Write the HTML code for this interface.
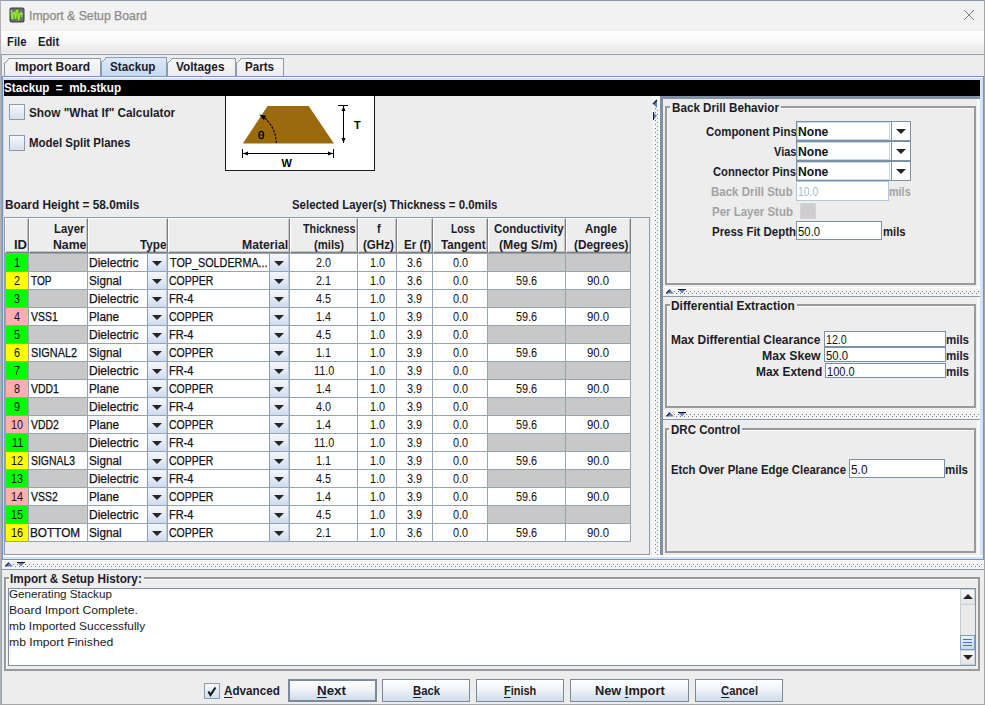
<!DOCTYPE html>
<html><head><meta charset="utf-8"><style>
html,body{margin:0;padding:0;width:985px;height:705px;overflow:hidden;background:#ededed}
body{position:relative;font-family:"Liberation Sans",sans-serif}
body>div{position:absolute}
body>svg{position:absolute}
.r{-webkit-text-stroke:0.25px currentColor}
.t{white-space:nowrap;line-height:20px;transform-origin:0 0}
u{text-decoration-thickness:1px;text-underline-offset:1.5px}
</style></head><body>
<div style="left:0px;top:0px;width:985px;height:30px;background:#f2f2f2"></div>
<div style="left:0px;top:0px;width:985px;height:1px;background:#8e9aa6"></div>
<svg style="left:9px;top:7px" width="16" height="16" viewBox="0 0 16 16"><rect x="0.5" y="0.5" width="15" height="15" rx="2" fill="#3a3a3a"/><rect x="1.5" y="1.5" width="13" height="13" rx="1" fill="#6e6e72"/><path d="M1.5 7.5 L14.5 7" stroke="#c8c8d0" stroke-width="0.8"/><path d="M1.5 4.5 L2.5 3.5 L2.8 11.5 L3.8 11.8 L4.3 5.5 L5.8 5.3 L6.2 11.3 L7 11 L7.4 3.5 L8.8 3.4 L9.4 12.8 L10.2 12 L10.8 7 L12.5 5.3 L12.8 10.2" stroke="#8cf01e" stroke-width="1.3" fill="none" stroke-linejoin="round"/></svg>
<div class="t r" style="left:29.37px;top:6.00px;font-size:12.5px;font-weight:normal;color:#8a8a8a;transform:scaleX(0.9801);">Import &amp; Setup Board</div>
<svg style="left:963px;top:9px" width="12" height="12" viewBox="0 0 12 12"><path d="M1 1 L11 11 M11 1 L1 11" stroke="#808080" stroke-width="1"/></svg>
<div style="left:0px;top:31px;width:985px;height:23px;background:linear-gradient(#ffffff,#fafafa 40%,#e4e4e4)"></div>
<div style="left:0px;top:53px;width:985px;height:1px;background:#f3efea"></div>
<div style="left:0px;top:54px;width:985px;height:1px;background:#8e9cab"></div>
<div class="t" style="left:6.94px;top:32.00px;font-size:12px;font-weight:bold;color:#1c1c28;transform:scaleX(0.9399);">File</div>
<div class="t" style="left:37.84px;top:32.00px;font-size:12px;font-weight:bold;color:#1c1c28;transform:scaleX(0.9359);">Edit</div>
<div style="left:0px;top:55px;width:985px;height:650px;background:#ededed"></div>
<div style="left:4px;top:58px;width:97px;height:19px;background:linear-gradient(#f8f8f8,#ececec);border:1px solid #8d9cab;border-bottom:none;box-sizing:border-box;clip-path:polygon(5px 0,100% 0,100% 100%,0 100%,0 5px)"></div>
<svg style="left:4px;top:58px" width="6" height="6"><path d="M0.5 5.5 L5.5 0.5" stroke="#8d9cab" stroke-width="1"/></svg>
<div class="t" style="left:14.89px;top:57.00px;font-size:12px;font-weight:bold;color:#1c1c28;transform:scaleX(0.9981);">Import Board</div>
<div style="left:167px;top:58px;width:69px;height:19px;background:linear-gradient(#f8f8f8,#ececec);border:1px solid #8d9cab;border-bottom:none;box-sizing:border-box;clip-path:polygon(5px 0,100% 0,100% 100%,0 100%,0 5px)"></div>
<svg style="left:167px;top:58px" width="6" height="6"><path d="M0.5 5.5 L5.5 0.5" stroke="#8d9cab" stroke-width="1"/></svg>
<div class="t" style="left:176.11px;top:57.00px;font-size:12px;font-weight:bold;color:#1c1c28;transform:scaleX(0.9868);">Voltages</div>
<div style="left:236px;top:58px;width:48px;height:19px;background:linear-gradient(#f8f8f8,#ececec);border:1px solid #8d9cab;border-bottom:none;box-sizing:border-box;clip-path:polygon(5px 0,100% 0,100% 100%,0 100%,0 5px)"></div>
<svg style="left:236px;top:58px" width="6" height="6"><path d="M0.5 5.5 L5.5 0.5" stroke="#8d9cab" stroke-width="1"/></svg>
<div class="t" style="left:244.72px;top:57.00px;font-size:12px;font-weight:bold;color:#1c1c28;transform:scaleX(0.9648);">Parts</div>
<div style="left:101px;top:57px;width:66px;height:20px;background:linear-gradient(#dce9f7,#c5daf1);border:1px solid #8d9cab;border-bottom:none;box-sizing:border-box;clip-path:polygon(5px 0,100% 0,100% 100%,0 100%,0 5px)"></div>
<svg style="left:101px;top:57px" width="6" height="6"><path d="M0.5 5.5 L5.5 0.5" stroke="#8d9cab" stroke-width="1"/></svg>
<div class="t" style="left:110.45px;top:57.00px;font-size:12px;font-weight:bold;color:#1c1c28;transform:scaleX(0.9729);">Stackup</div>
<div style="left:2px;top:76px;width:982px;height:484px;border:1px solid #7593c4;box-sizing:border-box;background:#d3e3f5"></div>
<div style="left:3px;top:77px;width:980px;height:1px;background:#fff"></div>
<div style="left:3px;top:78px;width:1px;height:481px;background:#c6daf2"></div>
<div style="left:4px;top:80px;width:976px;height:16px;background:#000"></div>
<div class="t" style="left:4.25px;top:78.00px;font-size:12px;font-weight:bold;color:#fff;transform:scaleX(0.9722);">Stackup&nbsp; =&nbsp; mb.stkup</div>
<div style="left:4px;top:96px;width:648px;height:460px;background:#ededed"></div>
<div style="left:4px;top:96px;width:648px;height:1px;background:#e3ebf3"></div>
<div style="left:9px;top:104px;width:16px;height:16px;border:1px solid #8c9cae;box-sizing:border-box;background:linear-gradient(#f6f8fb,#d3dfeb)"></div>
<div class="t" style="left:28.55px;top:103.00px;font-size:12px;font-weight:bold;color:#1c1c28;transform:scaleX(0.9831);">Show "What If" Calculator</div>
<div style="left:9px;top:135px;width:16px;height:16px;border:1px solid #8c9cae;box-sizing:border-box;background:linear-gradient(#f6f8fb,#d3dfeb)"></div>
<div class="t" style="left:28.73px;top:133.00px;font-size:12px;font-weight:bold;color:#1c1c28;transform:scaleX(0.9558);">Model Split Planes</div>
<svg style="left:225px;top:96px" width="150" height="76" viewBox="0 0 150 76"><rect x="0.5" y="-1" width="149" height="75.5" fill="#fff" stroke="#1a1a1a" stroke-width="1"/><path d="M42.6 10 L83.7 10 L109 47.6 L17.8 47.6 Z" fill="#9b6a0c"/><path d="M51.3 47.1 A33.5 33.5 0 0 0 38.1 20.8" stroke="#000" fill="none" stroke-width="1.1" stroke-dasharray="2.5 1.2"/><path d="M34.3 18.4 L41.1 19.7 L38.5 24.0 Z" fill="#000"/><path d="M18 57.5 L108 57.5" stroke="#000" stroke-width="1"/><path d="M17.5 53 L17.5 62 M108.5 53 L108.5 62" stroke="#000"/><path d="M18 57.5 L23 55.5 L23 59.5 Z M108 57.5 L103 55.5 L103 59.5 Z" fill="#000"/><path d="M113 9.5 L123 9.5 M118.5 10 L118.5 47" stroke="#000"/><path d="M118.5 10 L116.5 15 L120.5 15 Z M118.5 47 L116.5 42 L120.5 42 Z" fill="#000"/><text x="129" y="33.3" font-family="Liberation Sans" font-weight="bold" font-size="11">T</text><text x="61.8" y="70.8" text-anchor="middle" font-family="Liberation Sans" font-weight="bold" font-size="11">W</text><ellipse cx="36.3" cy="39" rx="2.3" ry="3.6" fill="none" stroke="#000" stroke-width="1.3"/><path d="M34.5 39 L38 39" stroke="#000" stroke-width="0.8"/></svg>
<div class="t" style="left:5.30px;top:195.00px;font-size:12px;font-weight:bold;color:#1c1c28;transform:scaleX(0.9853);">Board Height = 58.0mils</div>
<div class="t" style="left:291.76px;top:195.00px;font-size:12px;font-weight:bold;color:#1c1c28;transform:scaleX(0.9520);">Selected Layer(s) Thickness = 0.0mils</div>
<div style="left:4px;top:217px;width:646px;height:338px;border:1px solid #8d9aa8;box-sizing:border-box;background:#ededed"></div>
<div style="left:5px;top:218px;width:644px;height:35px;background:#ededed"></div>
<div style="left:5px;top:218px;width:24px;height:35px;box-sizing:border-box;border-left:1px solid #fff;border-top:1px solid #fff;border-right:1px solid #7d7d7d;border-bottom:1px solid #7d7d7d;box-shadow:inset -1px -1px 0 #c4c4c4;background:#ededed"></div>
<div style="left:29px;top:218px;width:59px;height:35px;box-sizing:border-box;border-left:1px solid #fff;border-top:1px solid #fff;border-right:1px solid #7d7d7d;border-bottom:1px solid #7d7d7d;box-shadow:inset -1px -1px 0 #c4c4c4;background:#ededed"></div>
<div style="left:88px;top:218px;width:80px;height:35px;box-sizing:border-box;border-left:1px solid #fff;border-top:1px solid #fff;border-right:1px solid #7d7d7d;border-bottom:1px solid #7d7d7d;box-shadow:inset -1px -1px 0 #c4c4c4;background:#ededed"></div>
<div style="left:168px;top:218px;width:122px;height:35px;box-sizing:border-box;border-left:1px solid #fff;border-top:1px solid #fff;border-right:1px solid #7d7d7d;border-bottom:1px solid #7d7d7d;box-shadow:inset -1px -1px 0 #c4c4c4;background:#ededed"></div>
<div style="left:290px;top:218px;width:68px;height:35px;box-sizing:border-box;border-left:1px solid #fff;border-top:1px solid #fff;border-right:1px solid #7d7d7d;border-bottom:1px solid #7d7d7d;box-shadow:inset -1px -1px 0 #c4c4c4;background:#ededed"></div>
<div style="left:358px;top:218px;width:39px;height:35px;box-sizing:border-box;border-left:1px solid #fff;border-top:1px solid #fff;border-right:1px solid #7d7d7d;border-bottom:1px solid #7d7d7d;box-shadow:inset -1px -1px 0 #c4c4c4;background:#ededed"></div>
<div style="left:397px;top:218px;width:36px;height:35px;box-sizing:border-box;border-left:1px solid #fff;border-top:1px solid #fff;border-right:1px solid #7d7d7d;border-bottom:1px solid #7d7d7d;box-shadow:inset -1px -1px 0 #c4c4c4;background:#ededed"></div>
<div style="left:433px;top:218px;width:55px;height:35px;box-sizing:border-box;border-left:1px solid #fff;border-top:1px solid #fff;border-right:1px solid #7d7d7d;border-bottom:1px solid #7d7d7d;box-shadow:inset -1px -1px 0 #c4c4c4;background:#ededed"></div>
<div style="left:488px;top:218px;width:78px;height:35px;box-sizing:border-box;border-left:1px solid #fff;border-top:1px solid #fff;border-right:1px solid #7d7d7d;border-bottom:1px solid #7d7d7d;box-shadow:inset -1px -1px 0 #c4c4c4;background:#ededed"></div>
<div style="left:566px;top:218px;width:65px;height:35px;box-sizing:border-box;border-left:1px solid #fff;border-top:1px solid #fff;border-right:1px solid #7d7d7d;border-bottom:1px solid #7d7d7d;box-shadow:inset -1px -1px 0 #c4c4c4;background:#ededed"></div>
<div class="t" style="left:14.12px;top:235.00px;font-size:12px;font-weight:bold;color:#1c1c28;transform:scaleX(1.0861);">ID</div>
<div class="t" style="left:53.53px;top:219.00px;font-size:12px;font-weight:bold;color:#1c1c28;transform:scaleX(0.9501);">Layer</div>
<div class="t" style="left:52.77px;top:235.00px;font-size:12px;font-weight:bold;color:#1c1c28;transform:scaleX(1.0232);">Name</div>
<div class="t" style="left:139.68px;top:235.00px;font-size:12px;font-weight:bold;color:#1c1c28;transform:scaleX(0.9744);">Type</div>
<div class="t" style="left:242.08px;top:235.00px;font-size:12px;font-weight:bold;color:#1c1c28;transform:scaleX(1.0181);">Material</div>
<div class="t" style="left:303.49px;top:219.00px;font-size:12px;font-weight:bold;color:#1c1c28;transform:scaleX(0.8953);">Thickness</div>
<div class="t" style="left:313.74px;top:235.00px;font-size:12px;font-weight:bold;color:#1c1c28;transform:scaleX(0.9413);">(mils)</div>
<div class="t" style="left:377.01px;top:219.00px;font-size:12px;font-weight:bold;color:#1c1c28;transform:scaleX(0.9186);">f</div>
<div class="t" style="left:363.42px;top:235.00px;font-size:12px;font-weight:bold;color:#1c1c28;transform:scaleX(0.9617);">(GHz)</div>
<div class="t" style="left:403.82px;top:235.00px;font-size:12px;font-weight:bold;color:#1c1c28;transform:scaleX(0.9669);">Er (f)</div>
<div class="t" style="left:450.81px;top:219.00px;font-size:12px;font-weight:bold;color:#1c1c28;transform:scaleX(0.8502);">Loss</div>
<div class="t" style="left:441.38px;top:235.00px;font-size:12px;font-weight:bold;color:#1c1c28;transform:scaleX(0.9734);">Tangent</div>
<div class="t" style="left:493.94px;top:219.00px;font-size:12px;font-weight:bold;color:#1c1c28;transform:scaleX(0.9581);">Conductivity</div>
<div class="t" style="left:499.39px;top:235.00px;font-size:12px;font-weight:bold;color:#1c1c28;transform:scaleX(1.0173);">(Meg S/m)</div>
<div class="t" style="left:585.01px;top:219.00px;font-size:12px;font-weight:bold;color:#1c1c28;transform:scaleX(0.9559);">Angle</div>
<div class="t" style="left:574.01px;top:235.00px;font-size:12px;font-weight:bold;color:#1c1c28;transform:scaleX(0.9843);">(Degrees)</div>
<div style="left:5px;top:253px;width:626px;height:289px;background:#96a3b2"></div>
<div style="left:6px;top:254px;width:22px;height:17px;background:#00ff00"></div>
<div style="left:29px;top:254px;width:58px;height:17px;background:#c8c8c8"></div>
<div style="left:88px;top:254px;width:79px;height:17px;background:#fff"></div>
<div style="left:168px;top:254px;width:121px;height:17px;background:#fff"></div>
<div style="left:290px;top:254px;width:67px;height:17px;background:#fff"></div>
<div style="left:358px;top:254px;width:38px;height:17px;background:#fff"></div>
<div style="left:397px;top:254px;width:35px;height:17px;background:#fff"></div>
<div style="left:433px;top:254px;width:54px;height:17px;background:#fff"></div>
<div style="left:488px;top:254px;width:77px;height:17px;background:#c8c8c8"></div>
<div style="left:566px;top:254px;width:64px;height:17px;background:#c8c8c8"></div>
<div class="t" style="left:14.15px;top:253.00px;font-size:12px;font-weight:normal;color:#101018;transform:scaleX(0.9000);">1</div>
<div class="t r" style="left:88.81px;top:253.00px;font-size:12px;font-weight:normal;color:#101018;transform:scaleX(1.0015);">Dielectric</div>
<div style="left:147px;top:254px;width:20px;height:17px;box-sizing:border-box;border-left:1px solid #8b9cb0;border-right:1px solid #c0ccd8;background:linear-gradient(#f4f6fb,#e3eaf5 50%,#cddbee)"></div>
<svg style="left:152px;top:261px" width="10" height="6"><path d="M0 0 L10 0 L5 5 Z" fill="#262626"/></svg>
<div class="t r" style="left:169.56px;top:253.00px;font-size:12px;font-weight:normal;color:#101018;transform:scaleX(0.8998);">TOP_SOLDERMA...</div>
<div style="left:269px;top:254px;width:20px;height:17px;box-sizing:border-box;border-left:1px solid #8b9cb0;border-right:1px solid #c0ccd8;background:linear-gradient(#f4f6fb,#e3eaf5 50%,#cddbee)"></div>
<svg style="left:274px;top:261px" width="10" height="6"><path d="M0 0 L10 0 L5 5 Z" fill="#262626"/></svg>
<div class="t" style="left:316.23px;top:253.00px;font-size:12px;font-weight:normal;color:#101018;transform:scaleX(0.9000);">2.0</div>
<div class="t" style="left:369.59px;top:253.00px;font-size:12px;font-weight:normal;color:#101018;transform:scaleX(0.9000);">1.0</div>
<div class="t" style="left:407.32px;top:253.00px;font-size:12px;font-weight:normal;color:#101018;transform:scaleX(0.9000);">3.6</div>
<div class="t" style="left:452.78px;top:253.00px;font-size:12px;font-weight:normal;color:#101018;transform:scaleX(0.9000);">0.0</div>
<div style="left:6px;top:272px;width:22px;height:17px;background:#ffff00"></div>
<div style="left:29px;top:272px;width:58px;height:17px;background:#fff"></div>
<div style="left:88px;top:272px;width:79px;height:17px;background:#fff"></div>
<div style="left:168px;top:272px;width:121px;height:17px;background:#fff"></div>
<div style="left:290px;top:272px;width:67px;height:17px;background:#fff"></div>
<div style="left:358px;top:272px;width:38px;height:17px;background:#fff"></div>
<div style="left:397px;top:272px;width:35px;height:17px;background:#fff"></div>
<div style="left:433px;top:272px;width:54px;height:17px;background:#fff"></div>
<div style="left:488px;top:272px;width:77px;height:17px;background:#fff"></div>
<div style="left:566px;top:272px;width:64px;height:17px;background:#fff"></div>
<div class="t" style="left:14.30px;top:271.00px;font-size:12px;font-weight:normal;color:#101018;transform:scaleX(0.9000);">2</div>
<div class="t r" style="left:30.97px;top:271.00px;font-size:12px;font-weight:normal;color:#101018;transform:scaleX(0.8408);">TOP</div>
<div class="t r" style="left:89.27px;top:271.00px;font-size:12px;font-weight:normal;color:#101018;transform:scaleX(0.9747);">Signal</div>
<div style="left:147px;top:272px;width:20px;height:17px;box-sizing:border-box;border-left:1px solid #8b9cb0;border-right:1px solid #c0ccd8;background:linear-gradient(#f4f6fb,#e3eaf5 50%,#cddbee)"></div>
<svg style="left:152px;top:279px" width="10" height="6"><path d="M0 0 L10 0 L5 5 Z" fill="#262626"/></svg>
<div class="t r" style="left:169.28px;top:271.00px;font-size:12px;font-weight:normal;color:#101018;transform:scaleX(0.8727);">COPPER</div>
<div style="left:269px;top:272px;width:20px;height:17px;box-sizing:border-box;border-left:1px solid #8b9cb0;border-right:1px solid #c0ccd8;background:linear-gradient(#f4f6fb,#e3eaf5 50%,#cddbee)"></div>
<svg style="left:274px;top:279px" width="10" height="6"><path d="M0 0 L10 0 L5 5 Z" fill="#262626"/></svg>
<div class="t" style="left:316.28px;top:271.00px;font-size:12px;font-weight:normal;color:#101018;transform:scaleX(0.9000);">2.1</div>
<div class="t" style="left:369.59px;top:271.00px;font-size:12px;font-weight:normal;color:#101018;transform:scaleX(0.9000);">1.0</div>
<div class="t" style="left:407.32px;top:271.00px;font-size:12px;font-weight:normal;color:#101018;transform:scaleX(0.9000);">3.6</div>
<div class="t" style="left:452.78px;top:271.00px;font-size:12px;font-weight:normal;color:#101018;transform:scaleX(0.9000);">0.0</div>
<div class="t" style="left:516.27px;top:271.00px;font-size:12px;font-weight:normal;color:#101018;transform:scaleX(0.9038);">59.6</div>
<div class="t" style="left:587.21px;top:271.00px;font-size:12px;font-weight:normal;color:#101018;transform:scaleX(0.9453);">90.0</div>
<div style="left:6px;top:290px;width:22px;height:17px;background:#00ff00"></div>
<div style="left:29px;top:290px;width:58px;height:17px;background:#c8c8c8"></div>
<div style="left:88px;top:290px;width:79px;height:17px;background:#fff"></div>
<div style="left:168px;top:290px;width:121px;height:17px;background:#fff"></div>
<div style="left:290px;top:290px;width:67px;height:17px;background:#fff"></div>
<div style="left:358px;top:290px;width:38px;height:17px;background:#fff"></div>
<div style="left:397px;top:290px;width:35px;height:17px;background:#fff"></div>
<div style="left:433px;top:290px;width:54px;height:17px;background:#fff"></div>
<div style="left:488px;top:290px;width:77px;height:17px;background:#c8c8c8"></div>
<div style="left:566px;top:290px;width:64px;height:17px;background:#c8c8c8"></div>
<div class="t" style="left:14.33px;top:289.00px;font-size:12px;font-weight:normal;color:#101018;transform:scaleX(0.9000);">3</div>
<div class="t r" style="left:88.81px;top:289.00px;font-size:12px;font-weight:normal;color:#101018;transform:scaleX(1.0015);">Dielectric</div>
<div style="left:147px;top:290px;width:20px;height:17px;box-sizing:border-box;border-left:1px solid #8b9cb0;border-right:1px solid #c0ccd8;background:linear-gradient(#f4f6fb,#e3eaf5 50%,#cddbee)"></div>
<svg style="left:152px;top:297px" width="10" height="6"><path d="M0 0 L10 0 L5 5 Z" fill="#262626"/></svg>
<div class="t r" style="left:168.90px;top:289.00px;font-size:12px;font-weight:normal;color:#101018;transform:scaleX(0.9123);">FR-4</div>
<div style="left:269px;top:290px;width:20px;height:17px;box-sizing:border-box;border-left:1px solid #8b9cb0;border-right:1px solid #c0ccd8;background:linear-gradient(#f4f6fb,#e3eaf5 50%,#cddbee)"></div>
<svg style="left:274px;top:297px" width="10" height="6"><path d="M0 0 L10 0 L5 5 Z" fill="#262626"/></svg>
<div class="t" style="left:316.39px;top:289.00px;font-size:12px;font-weight:normal;color:#101018;transform:scaleX(0.9000);">4.5</div>
<div class="t" style="left:369.59px;top:289.00px;font-size:12px;font-weight:normal;color:#101018;transform:scaleX(0.9000);">1.0</div>
<div class="t" style="left:407.33px;top:289.00px;font-size:12px;font-weight:normal;color:#101018;transform:scaleX(0.9000);">3.9</div>
<div class="t" style="left:452.78px;top:289.00px;font-size:12px;font-weight:normal;color:#101018;transform:scaleX(0.9000);">0.0</div>
<div style="left:6px;top:308px;width:22px;height:17px;background:#ffafaf"></div>
<div style="left:29px;top:308px;width:58px;height:17px;background:#fff"></div>
<div style="left:88px;top:308px;width:79px;height:17px;background:#fff"></div>
<div style="left:168px;top:308px;width:121px;height:17px;background:#fff"></div>
<div style="left:290px;top:308px;width:67px;height:17px;background:#fff"></div>
<div style="left:358px;top:308px;width:38px;height:17px;background:#fff"></div>
<div style="left:397px;top:308px;width:35px;height:17px;background:#fff"></div>
<div style="left:433px;top:308px;width:54px;height:17px;background:#fff"></div>
<div style="left:488px;top:308px;width:77px;height:17px;background:#fff"></div>
<div style="left:566px;top:308px;width:64px;height:17px;background:#fff"></div>
<div class="t" style="left:14.33px;top:307.00px;font-size:12px;font-weight:normal;color:#101018;transform:scaleX(0.9000);">4</div>
<div class="t r" style="left:31.15px;top:307.00px;font-size:12px;font-weight:normal;color:#101018;transform:scaleX(0.8700);">VSS1</div>
<div class="t r" style="left:88.83px;top:307.00px;font-size:12px;font-weight:normal;color:#101018;transform:scaleX(0.9798);">Plane</div>
<div style="left:147px;top:308px;width:20px;height:17px;box-sizing:border-box;border-left:1px solid #8b9cb0;border-right:1px solid #c0ccd8;background:linear-gradient(#f4f6fb,#e3eaf5 50%,#cddbee)"></div>
<svg style="left:152px;top:315px" width="10" height="6"><path d="M0 0 L10 0 L5 5 Z" fill="#262626"/></svg>
<div class="t r" style="left:169.28px;top:307.00px;font-size:12px;font-weight:normal;color:#101018;transform:scaleX(0.8727);">COPPER</div>
<div style="left:269px;top:308px;width:20px;height:17px;box-sizing:border-box;border-left:1px solid #8b9cb0;border-right:1px solid #c0ccd8;background:linear-gradient(#f4f6fb,#e3eaf5 50%,#cddbee)"></div>
<svg style="left:274px;top:315px" width="10" height="6"><path d="M0 0 L10 0 L5 5 Z" fill="#262626"/></svg>
<div class="t" style="left:316.04px;top:307.00px;font-size:12px;font-weight:normal;color:#101018;transform:scaleX(0.9000);">1.4</div>
<div class="t" style="left:369.59px;top:307.00px;font-size:12px;font-weight:normal;color:#101018;transform:scaleX(0.9000);">1.0</div>
<div class="t" style="left:407.33px;top:307.00px;font-size:12px;font-weight:normal;color:#101018;transform:scaleX(0.9000);">3.9</div>
<div class="t" style="left:452.78px;top:307.00px;font-size:12px;font-weight:normal;color:#101018;transform:scaleX(0.9000);">0.0</div>
<div class="t" style="left:516.27px;top:307.00px;font-size:12px;font-weight:normal;color:#101018;transform:scaleX(0.9038);">59.6</div>
<div class="t" style="left:587.21px;top:307.00px;font-size:12px;font-weight:normal;color:#101018;transform:scaleX(0.9453);">90.0</div>
<div style="left:6px;top:326px;width:22px;height:17px;background:#00ff00"></div>
<div style="left:29px;top:326px;width:58px;height:17px;background:#c8c8c8"></div>
<div style="left:88px;top:326px;width:79px;height:17px;background:#fff"></div>
<div style="left:168px;top:326px;width:121px;height:17px;background:#fff"></div>
<div style="left:290px;top:326px;width:67px;height:17px;background:#fff"></div>
<div style="left:358px;top:326px;width:38px;height:17px;background:#fff"></div>
<div style="left:397px;top:326px;width:35px;height:17px;background:#fff"></div>
<div style="left:433px;top:326px;width:54px;height:17px;background:#fff"></div>
<div style="left:488px;top:326px;width:77px;height:17px;background:#c8c8c8"></div>
<div style="left:566px;top:326px;width:64px;height:17px;background:#c8c8c8"></div>
<div class="t" style="left:14.30px;top:325.00px;font-size:12px;font-weight:normal;color:#101018;transform:scaleX(0.9000);">5</div>
<div class="t r" style="left:88.81px;top:325.00px;font-size:12px;font-weight:normal;color:#101018;transform:scaleX(1.0015);">Dielectric</div>
<div style="left:147px;top:326px;width:20px;height:17px;box-sizing:border-box;border-left:1px solid #8b9cb0;border-right:1px solid #c0ccd8;background:linear-gradient(#f4f6fb,#e3eaf5 50%,#cddbee)"></div>
<svg style="left:152px;top:333px" width="10" height="6"><path d="M0 0 L10 0 L5 5 Z" fill="#262626"/></svg>
<div class="t r" style="left:168.90px;top:325.00px;font-size:12px;font-weight:normal;color:#101018;transform:scaleX(0.9123);">FR-4</div>
<div style="left:269px;top:326px;width:20px;height:17px;box-sizing:border-box;border-left:1px solid #8b9cb0;border-right:1px solid #c0ccd8;background:linear-gradient(#f4f6fb,#e3eaf5 50%,#cddbee)"></div>
<svg style="left:274px;top:333px" width="10" height="6"><path d="M0 0 L10 0 L5 5 Z" fill="#262626"/></svg>
<div class="t" style="left:316.39px;top:325.00px;font-size:12px;font-weight:normal;color:#101018;transform:scaleX(0.9000);">4.5</div>
<div class="t" style="left:369.59px;top:325.00px;font-size:12px;font-weight:normal;color:#101018;transform:scaleX(0.9000);">1.0</div>
<div class="t" style="left:407.33px;top:325.00px;font-size:12px;font-weight:normal;color:#101018;transform:scaleX(0.9000);">3.9</div>
<div class="t" style="left:452.78px;top:325.00px;font-size:12px;font-weight:normal;color:#101018;transform:scaleX(0.9000);">0.0</div>
<div style="left:6px;top:344px;width:22px;height:17px;background:#ffff00"></div>
<div style="left:29px;top:344px;width:58px;height:17px;background:#fff"></div>
<div style="left:88px;top:344px;width:79px;height:17px;background:#fff"></div>
<div style="left:168px;top:344px;width:121px;height:17px;background:#fff"></div>
<div style="left:290px;top:344px;width:67px;height:17px;background:#fff"></div>
<div style="left:358px;top:344px;width:38px;height:17px;background:#fff"></div>
<div style="left:397px;top:344px;width:35px;height:17px;background:#fff"></div>
<div style="left:433px;top:344px;width:54px;height:17px;background:#fff"></div>
<div style="left:488px;top:344px;width:77px;height:17px;background:#fff"></div>
<div style="left:566px;top:344px;width:64px;height:17px;background:#fff"></div>
<div class="t" style="left:14.26px;top:343.00px;font-size:12px;font-weight:normal;color:#101018;transform:scaleX(0.9000);">6</div>
<div class="t r" style="left:30.71px;top:343.00px;font-size:12px;font-weight:normal;color:#101018;transform:scaleX(0.9085);">SIGNAL2</div>
<div class="t r" style="left:89.27px;top:343.00px;font-size:12px;font-weight:normal;color:#101018;transform:scaleX(0.9747);">Signal</div>
<div style="left:147px;top:344px;width:20px;height:17px;box-sizing:border-box;border-left:1px solid #8b9cb0;border-right:1px solid #c0ccd8;background:linear-gradient(#f4f6fb,#e3eaf5 50%,#cddbee)"></div>
<svg style="left:152px;top:351px" width="10" height="6"><path d="M0 0 L10 0 L5 5 Z" fill="#262626"/></svg>
<div class="t r" style="left:169.28px;top:343.00px;font-size:12px;font-weight:normal;color:#101018;transform:scaleX(0.8727);">COPPER</div>
<div style="left:269px;top:344px;width:20px;height:17px;box-sizing:border-box;border-left:1px solid #8b9cb0;border-right:1px solid #c0ccd8;background:linear-gradient(#f4f6fb,#e3eaf5 50%,#cddbee)"></div>
<svg style="left:274px;top:351px" width="10" height="6"><path d="M0 0 L10 0 L5 5 Z" fill="#262626"/></svg>
<div class="t" style="left:316.15px;top:343.00px;font-size:12px;font-weight:normal;color:#101018;transform:scaleX(0.9000);">1.1</div>
<div class="t" style="left:369.59px;top:343.00px;font-size:12px;font-weight:normal;color:#101018;transform:scaleX(0.9000);">1.0</div>
<div class="t" style="left:407.33px;top:343.00px;font-size:12px;font-weight:normal;color:#101018;transform:scaleX(0.9000);">3.9</div>
<div class="t" style="left:452.78px;top:343.00px;font-size:12px;font-weight:normal;color:#101018;transform:scaleX(0.9000);">0.0</div>
<div class="t" style="left:516.27px;top:343.00px;font-size:12px;font-weight:normal;color:#101018;transform:scaleX(0.9038);">59.6</div>
<div class="t" style="left:587.21px;top:343.00px;font-size:12px;font-weight:normal;color:#101018;transform:scaleX(0.9453);">90.0</div>
<div style="left:6px;top:362px;width:22px;height:17px;background:#00ff00"></div>
<div style="left:29px;top:362px;width:58px;height:17px;background:#c8c8c8"></div>
<div style="left:88px;top:362px;width:79px;height:17px;background:#fff"></div>
<div style="left:168px;top:362px;width:121px;height:17px;background:#fff"></div>
<div style="left:290px;top:362px;width:67px;height:17px;background:#fff"></div>
<div style="left:358px;top:362px;width:38px;height:17px;background:#fff"></div>
<div style="left:397px;top:362px;width:35px;height:17px;background:#fff"></div>
<div style="left:433px;top:362px;width:54px;height:17px;background:#fff"></div>
<div style="left:488px;top:362px;width:77px;height:17px;background:#c8c8c8"></div>
<div style="left:566px;top:362px;width:64px;height:17px;background:#c8c8c8"></div>
<div class="t" style="left:14.30px;top:361.00px;font-size:12px;font-weight:normal;color:#101018;transform:scaleX(0.9000);">7</div>
<div class="t r" style="left:88.81px;top:361.00px;font-size:12px;font-weight:normal;color:#101018;transform:scaleX(1.0015);">Dielectric</div>
<div style="left:147px;top:362px;width:20px;height:17px;box-sizing:border-box;border-left:1px solid #8b9cb0;border-right:1px solid #c0ccd8;background:linear-gradient(#f4f6fb,#e3eaf5 50%,#cddbee)"></div>
<svg style="left:152px;top:369px" width="10" height="6"><path d="M0 0 L10 0 L5 5 Z" fill="#262626"/></svg>
<div class="t r" style="left:168.90px;top:361.00px;font-size:12px;font-weight:normal;color:#101018;transform:scaleX(0.9123);">FR-4</div>
<div style="left:269px;top:362px;width:20px;height:17px;box-sizing:border-box;border-left:1px solid #8b9cb0;border-right:1px solid #c0ccd8;background:linear-gradient(#f4f6fb,#e3eaf5 50%,#cddbee)"></div>
<svg style="left:274px;top:369px" width="10" height="6"><path d="M0 0 L10 0 L5 5 Z" fill="#262626"/></svg>
<div class="t" style="left:313.50px;top:361.00px;font-size:12px;font-weight:normal;color:#101018;transform:scaleX(0.9000);">11.0</div>
<div class="t" style="left:369.59px;top:361.00px;font-size:12px;font-weight:normal;color:#101018;transform:scaleX(0.9000);">1.0</div>
<div class="t" style="left:407.33px;top:361.00px;font-size:12px;font-weight:normal;color:#101018;transform:scaleX(0.9000);">3.9</div>
<div class="t" style="left:452.78px;top:361.00px;font-size:12px;font-weight:normal;color:#101018;transform:scaleX(0.9000);">0.0</div>
<div style="left:6px;top:380px;width:22px;height:17px;background:#ffafaf"></div>
<div style="left:29px;top:380px;width:58px;height:17px;background:#fff"></div>
<div style="left:88px;top:380px;width:79px;height:17px;background:#fff"></div>
<div style="left:168px;top:380px;width:121px;height:17px;background:#fff"></div>
<div style="left:290px;top:380px;width:67px;height:17px;background:#fff"></div>
<div style="left:358px;top:380px;width:38px;height:17px;background:#fff"></div>
<div style="left:397px;top:380px;width:35px;height:17px;background:#fff"></div>
<div style="left:433px;top:380px;width:54px;height:17px;background:#fff"></div>
<div style="left:488px;top:380px;width:77px;height:17px;background:#fff"></div>
<div style="left:566px;top:380px;width:64px;height:17px;background:#fff"></div>
<div class="t" style="left:14.30px;top:379.00px;font-size:12px;font-weight:normal;color:#101018;transform:scaleX(0.9000);">8</div>
<div class="t r" style="left:31.15px;top:379.00px;font-size:12px;font-weight:normal;color:#101018;transform:scaleX(0.8700);">VDD1</div>
<div class="t r" style="left:88.83px;top:379.00px;font-size:12px;font-weight:normal;color:#101018;transform:scaleX(0.9798);">Plane</div>
<div style="left:147px;top:380px;width:20px;height:17px;box-sizing:border-box;border-left:1px solid #8b9cb0;border-right:1px solid #c0ccd8;background:linear-gradient(#f4f6fb,#e3eaf5 50%,#cddbee)"></div>
<svg style="left:152px;top:387px" width="10" height="6"><path d="M0 0 L10 0 L5 5 Z" fill="#262626"/></svg>
<div class="t r" style="left:169.28px;top:379.00px;font-size:12px;font-weight:normal;color:#101018;transform:scaleX(0.8727);">COPPER</div>
<div style="left:269px;top:380px;width:20px;height:17px;box-sizing:border-box;border-left:1px solid #8b9cb0;border-right:1px solid #c0ccd8;background:linear-gradient(#f4f6fb,#e3eaf5 50%,#cddbee)"></div>
<svg style="left:274px;top:387px" width="10" height="6"><path d="M0 0 L10 0 L5 5 Z" fill="#262626"/></svg>
<div class="t" style="left:316.04px;top:379.00px;font-size:12px;font-weight:normal;color:#101018;transform:scaleX(0.9000);">1.4</div>
<div class="t" style="left:369.59px;top:379.00px;font-size:12px;font-weight:normal;color:#101018;transform:scaleX(0.9000);">1.0</div>
<div class="t" style="left:407.33px;top:379.00px;font-size:12px;font-weight:normal;color:#101018;transform:scaleX(0.9000);">3.9</div>
<div class="t" style="left:452.78px;top:379.00px;font-size:12px;font-weight:normal;color:#101018;transform:scaleX(0.9000);">0.0</div>
<div class="t" style="left:516.27px;top:379.00px;font-size:12px;font-weight:normal;color:#101018;transform:scaleX(0.9038);">59.6</div>
<div class="t" style="left:587.21px;top:379.00px;font-size:12px;font-weight:normal;color:#101018;transform:scaleX(0.9453);">90.0</div>
<div style="left:6px;top:398px;width:22px;height:17px;background:#00ff00"></div>
<div style="left:29px;top:398px;width:58px;height:17px;background:#c8c8c8"></div>
<div style="left:88px;top:398px;width:79px;height:17px;background:#fff"></div>
<div style="left:168px;top:398px;width:121px;height:17px;background:#fff"></div>
<div style="left:290px;top:398px;width:67px;height:17px;background:#fff"></div>
<div style="left:358px;top:398px;width:38px;height:17px;background:#fff"></div>
<div style="left:397px;top:398px;width:35px;height:17px;background:#fff"></div>
<div style="left:433px;top:398px;width:54px;height:17px;background:#fff"></div>
<div style="left:488px;top:398px;width:77px;height:17px;background:#c8c8c8"></div>
<div style="left:566px;top:398px;width:64px;height:17px;background:#c8c8c8"></div>
<div class="t" style="left:14.29px;top:397.00px;font-size:12px;font-weight:normal;color:#101018;transform:scaleX(0.9000);">9</div>
<div class="t r" style="left:88.81px;top:397.00px;font-size:12px;font-weight:normal;color:#101018;transform:scaleX(1.0015);">Dielectric</div>
<div style="left:147px;top:398px;width:20px;height:17px;box-sizing:border-box;border-left:1px solid #8b9cb0;border-right:1px solid #c0ccd8;background:linear-gradient(#f4f6fb,#e3eaf5 50%,#cddbee)"></div>
<svg style="left:152px;top:405px" width="10" height="6"><path d="M0 0 L10 0 L5 5 Z" fill="#262626"/></svg>
<div class="t r" style="left:168.90px;top:397.00px;font-size:12px;font-weight:normal;color:#101018;transform:scaleX(0.9123);">FR-4</div>
<div style="left:269px;top:398px;width:20px;height:17px;box-sizing:border-box;border-left:1px solid #8b9cb0;border-right:1px solid #c0ccd8;background:linear-gradient(#f4f6fb,#e3eaf5 50%,#cddbee)"></div>
<svg style="left:274px;top:405px" width="10" height="6"><path d="M0 0 L10 0 L5 5 Z" fill="#262626"/></svg>
<div class="t" style="left:316.38px;top:397.00px;font-size:12px;font-weight:normal;color:#101018;transform:scaleX(0.9000);">4.0</div>
<div class="t" style="left:369.59px;top:397.00px;font-size:12px;font-weight:normal;color:#101018;transform:scaleX(0.9000);">1.0</div>
<div class="t" style="left:407.33px;top:397.00px;font-size:12px;font-weight:normal;color:#101018;transform:scaleX(0.9000);">3.9</div>
<div class="t" style="left:452.78px;top:397.00px;font-size:12px;font-weight:normal;color:#101018;transform:scaleX(0.9000);">0.0</div>
<div style="left:6px;top:416px;width:22px;height:17px;background:#ffafaf"></div>
<div style="left:29px;top:416px;width:58px;height:17px;background:#fff"></div>
<div style="left:88px;top:416px;width:79px;height:17px;background:#fff"></div>
<div style="left:168px;top:416px;width:121px;height:17px;background:#fff"></div>
<div style="left:290px;top:416px;width:67px;height:17px;background:#fff"></div>
<div style="left:358px;top:416px;width:38px;height:17px;background:#fff"></div>
<div style="left:397px;top:416px;width:35px;height:17px;background:#fff"></div>
<div style="left:433px;top:416px;width:54px;height:17px;background:#fff"></div>
<div style="left:488px;top:416px;width:77px;height:17px;background:#fff"></div>
<div style="left:566px;top:416px;width:64px;height:17px;background:#fff"></div>
<div class="t" style="left:11.10px;top:415.00px;font-size:12px;font-weight:normal;color:#101018;transform:scaleX(0.9000);">10</div>
<div class="t r" style="left:31.15px;top:415.00px;font-size:12px;font-weight:normal;color:#101018;transform:scaleX(0.8700);">VDD2</div>
<div class="t r" style="left:88.83px;top:415.00px;font-size:12px;font-weight:normal;color:#101018;transform:scaleX(0.9798);">Plane</div>
<div style="left:147px;top:416px;width:20px;height:17px;box-sizing:border-box;border-left:1px solid #8b9cb0;border-right:1px solid #c0ccd8;background:linear-gradient(#f4f6fb,#e3eaf5 50%,#cddbee)"></div>
<svg style="left:152px;top:423px" width="10" height="6"><path d="M0 0 L10 0 L5 5 Z" fill="#262626"/></svg>
<div class="t r" style="left:169.28px;top:415.00px;font-size:12px;font-weight:normal;color:#101018;transform:scaleX(0.8727);">COPPER</div>
<div style="left:269px;top:416px;width:20px;height:17px;box-sizing:border-box;border-left:1px solid #8b9cb0;border-right:1px solid #c0ccd8;background:linear-gradient(#f4f6fb,#e3eaf5 50%,#cddbee)"></div>
<svg style="left:274px;top:423px" width="10" height="6"><path d="M0 0 L10 0 L5 5 Z" fill="#262626"/></svg>
<div class="t" style="left:316.04px;top:415.00px;font-size:12px;font-weight:normal;color:#101018;transform:scaleX(0.9000);">1.4</div>
<div class="t" style="left:369.59px;top:415.00px;font-size:12px;font-weight:normal;color:#101018;transform:scaleX(0.9000);">1.0</div>
<div class="t" style="left:407.33px;top:415.00px;font-size:12px;font-weight:normal;color:#101018;transform:scaleX(0.9000);">3.9</div>
<div class="t" style="left:452.78px;top:415.00px;font-size:12px;font-weight:normal;color:#101018;transform:scaleX(0.9000);">0.0</div>
<div class="t" style="left:516.27px;top:415.00px;font-size:12px;font-weight:normal;color:#101018;transform:scaleX(0.9038);">59.6</div>
<div class="t" style="left:587.21px;top:415.00px;font-size:12px;font-weight:normal;color:#101018;transform:scaleX(0.9453);">90.0</div>
<div style="left:6px;top:434px;width:22px;height:17px;background:#00ff00"></div>
<div style="left:29px;top:434px;width:58px;height:17px;background:#c8c8c8"></div>
<div style="left:88px;top:434px;width:79px;height:17px;background:#fff"></div>
<div style="left:168px;top:434px;width:121px;height:17px;background:#fff"></div>
<div style="left:290px;top:434px;width:67px;height:17px;background:#fff"></div>
<div style="left:358px;top:434px;width:38px;height:17px;background:#fff"></div>
<div style="left:397px;top:434px;width:35px;height:17px;background:#fff"></div>
<div style="left:433px;top:434px;width:54px;height:17px;background:#fff"></div>
<div style="left:488px;top:434px;width:77px;height:17px;background:#c8c8c8"></div>
<div style="left:566px;top:434px;width:64px;height:17px;background:#c8c8c8"></div>
<div class="t" style="left:11.55px;top:433.00px;font-size:12px;font-weight:normal;color:#101018;transform:scaleX(0.9000);">11</div>
<div class="t r" style="left:88.81px;top:433.00px;font-size:12px;font-weight:normal;color:#101018;transform:scaleX(1.0015);">Dielectric</div>
<div style="left:147px;top:434px;width:20px;height:17px;box-sizing:border-box;border-left:1px solid #8b9cb0;border-right:1px solid #c0ccd8;background:linear-gradient(#f4f6fb,#e3eaf5 50%,#cddbee)"></div>
<svg style="left:152px;top:441px" width="10" height="6"><path d="M0 0 L10 0 L5 5 Z" fill="#262626"/></svg>
<div class="t r" style="left:168.90px;top:433.00px;font-size:12px;font-weight:normal;color:#101018;transform:scaleX(0.9123);">FR-4</div>
<div style="left:269px;top:434px;width:20px;height:17px;box-sizing:border-box;border-left:1px solid #8b9cb0;border-right:1px solid #c0ccd8;background:linear-gradient(#f4f6fb,#e3eaf5 50%,#cddbee)"></div>
<svg style="left:274px;top:441px" width="10" height="6"><path d="M0 0 L10 0 L5 5 Z" fill="#262626"/></svg>
<div class="t" style="left:313.50px;top:433.00px;font-size:12px;font-weight:normal;color:#101018;transform:scaleX(0.9000);">11.0</div>
<div class="t" style="left:369.59px;top:433.00px;font-size:12px;font-weight:normal;color:#101018;transform:scaleX(0.9000);">1.0</div>
<div class="t" style="left:407.33px;top:433.00px;font-size:12px;font-weight:normal;color:#101018;transform:scaleX(0.9000);">3.9</div>
<div class="t" style="left:452.78px;top:433.00px;font-size:12px;font-weight:normal;color:#101018;transform:scaleX(0.9000);">0.0</div>
<div style="left:6px;top:452px;width:22px;height:17px;background:#ffff00"></div>
<div style="left:29px;top:452px;width:58px;height:17px;background:#fff"></div>
<div style="left:88px;top:452px;width:79px;height:17px;background:#fff"></div>
<div style="left:168px;top:452px;width:121px;height:17px;background:#fff"></div>
<div style="left:290px;top:452px;width:67px;height:17px;background:#fff"></div>
<div style="left:358px;top:452px;width:38px;height:17px;background:#fff"></div>
<div style="left:397px;top:452px;width:35px;height:17px;background:#fff"></div>
<div style="left:433px;top:452px;width:54px;height:17px;background:#fff"></div>
<div style="left:488px;top:452px;width:77px;height:17px;background:#fff"></div>
<div style="left:566px;top:452px;width:64px;height:17px;background:#fff"></div>
<div class="t" style="left:11.17px;top:451.00px;font-size:12px;font-weight:normal;color:#101018;transform:scaleX(0.9000);">12</div>
<div class="t r" style="left:30.73px;top:451.00px;font-size:12px;font-weight:normal;color:#101018;transform:scaleX(0.8700);">SIGNAL3</div>
<div class="t r" style="left:89.27px;top:451.00px;font-size:12px;font-weight:normal;color:#101018;transform:scaleX(0.9747);">Signal</div>
<div style="left:147px;top:452px;width:20px;height:17px;box-sizing:border-box;border-left:1px solid #8b9cb0;border-right:1px solid #c0ccd8;background:linear-gradient(#f4f6fb,#e3eaf5 50%,#cddbee)"></div>
<svg style="left:152px;top:459px" width="10" height="6"><path d="M0 0 L10 0 L5 5 Z" fill="#262626"/></svg>
<div class="t r" style="left:169.28px;top:451.00px;font-size:12px;font-weight:normal;color:#101018;transform:scaleX(0.8727);">COPPER</div>
<div style="left:269px;top:452px;width:20px;height:17px;box-sizing:border-box;border-left:1px solid #8b9cb0;border-right:1px solid #c0ccd8;background:linear-gradient(#f4f6fb,#e3eaf5 50%,#cddbee)"></div>
<svg style="left:274px;top:459px" width="10" height="6"><path d="M0 0 L10 0 L5 5 Z" fill="#262626"/></svg>
<div class="t" style="left:316.15px;top:451.00px;font-size:12px;font-weight:normal;color:#101018;transform:scaleX(0.9000);">1.1</div>
<div class="t" style="left:369.59px;top:451.00px;font-size:12px;font-weight:normal;color:#101018;transform:scaleX(0.9000);">1.0</div>
<div class="t" style="left:407.33px;top:451.00px;font-size:12px;font-weight:normal;color:#101018;transform:scaleX(0.9000);">3.9</div>
<div class="t" style="left:452.78px;top:451.00px;font-size:12px;font-weight:normal;color:#101018;transform:scaleX(0.9000);">0.0</div>
<div class="t" style="left:516.27px;top:451.00px;font-size:12px;font-weight:normal;color:#101018;transform:scaleX(0.9038);">59.6</div>
<div class="t" style="left:587.21px;top:451.00px;font-size:12px;font-weight:normal;color:#101018;transform:scaleX(0.9453);">90.0</div>
<div style="left:6px;top:470px;width:22px;height:17px;background:#00ff00"></div>
<div style="left:29px;top:470px;width:58px;height:17px;background:#c8c8c8"></div>
<div style="left:88px;top:470px;width:79px;height:17px;background:#fff"></div>
<div style="left:168px;top:470px;width:121px;height:17px;background:#fff"></div>
<div style="left:290px;top:470px;width:67px;height:17px;background:#fff"></div>
<div style="left:358px;top:470px;width:38px;height:17px;background:#fff"></div>
<div style="left:397px;top:470px;width:35px;height:17px;background:#fff"></div>
<div style="left:433px;top:470px;width:54px;height:17px;background:#fff"></div>
<div style="left:488px;top:470px;width:77px;height:17px;background:#c8c8c8"></div>
<div style="left:566px;top:470px;width:64px;height:17px;background:#c8c8c8"></div>
<div class="t" style="left:11.13px;top:469.00px;font-size:12px;font-weight:normal;color:#101018;transform:scaleX(0.9000);">13</div>
<div class="t r" style="left:88.81px;top:469.00px;font-size:12px;font-weight:normal;color:#101018;transform:scaleX(1.0015);">Dielectric</div>
<div style="left:147px;top:470px;width:20px;height:17px;box-sizing:border-box;border-left:1px solid #8b9cb0;border-right:1px solid #c0ccd8;background:linear-gradient(#f4f6fb,#e3eaf5 50%,#cddbee)"></div>
<svg style="left:152px;top:477px" width="10" height="6"><path d="M0 0 L10 0 L5 5 Z" fill="#262626"/></svg>
<div class="t r" style="left:168.90px;top:469.00px;font-size:12px;font-weight:normal;color:#101018;transform:scaleX(0.9123);">FR-4</div>
<div style="left:269px;top:470px;width:20px;height:17px;box-sizing:border-box;border-left:1px solid #8b9cb0;border-right:1px solid #c0ccd8;background:linear-gradient(#f4f6fb,#e3eaf5 50%,#cddbee)"></div>
<svg style="left:274px;top:477px" width="10" height="6"><path d="M0 0 L10 0 L5 5 Z" fill="#262626"/></svg>
<div class="t" style="left:316.39px;top:469.00px;font-size:12px;font-weight:normal;color:#101018;transform:scaleX(0.9000);">4.5</div>
<div class="t" style="left:369.59px;top:469.00px;font-size:12px;font-weight:normal;color:#101018;transform:scaleX(0.9000);">1.0</div>
<div class="t" style="left:407.33px;top:469.00px;font-size:12px;font-weight:normal;color:#101018;transform:scaleX(0.9000);">3.9</div>
<div class="t" style="left:452.78px;top:469.00px;font-size:12px;font-weight:normal;color:#101018;transform:scaleX(0.9000);">0.0</div>
<div style="left:6px;top:488px;width:22px;height:17px;background:#ffafaf"></div>
<div style="left:29px;top:488px;width:58px;height:17px;background:#fff"></div>
<div style="left:88px;top:488px;width:79px;height:17px;background:#fff"></div>
<div style="left:168px;top:488px;width:121px;height:17px;background:#fff"></div>
<div style="left:290px;top:488px;width:67px;height:17px;background:#fff"></div>
<div style="left:358px;top:488px;width:38px;height:17px;background:#fff"></div>
<div style="left:397px;top:488px;width:35px;height:17px;background:#fff"></div>
<div style="left:433px;top:488px;width:54px;height:17px;background:#fff"></div>
<div style="left:488px;top:488px;width:77px;height:17px;background:#fff"></div>
<div style="left:566px;top:488px;width:64px;height:17px;background:#fff"></div>
<div class="t" style="left:11.05px;top:487.00px;font-size:12px;font-weight:normal;color:#101018;transform:scaleX(0.9000);">14</div>
<div class="t r" style="left:31.15px;top:487.00px;font-size:12px;font-weight:normal;color:#101018;transform:scaleX(0.8700);">VSS2</div>
<div class="t r" style="left:88.83px;top:487.00px;font-size:12px;font-weight:normal;color:#101018;transform:scaleX(0.9798);">Plane</div>
<div style="left:147px;top:488px;width:20px;height:17px;box-sizing:border-box;border-left:1px solid #8b9cb0;border-right:1px solid #c0ccd8;background:linear-gradient(#f4f6fb,#e3eaf5 50%,#cddbee)"></div>
<svg style="left:152px;top:495px" width="10" height="6"><path d="M0 0 L10 0 L5 5 Z" fill="#262626"/></svg>
<div class="t r" style="left:169.28px;top:487.00px;font-size:12px;font-weight:normal;color:#101018;transform:scaleX(0.8727);">COPPER</div>
<div style="left:269px;top:488px;width:20px;height:17px;box-sizing:border-box;border-left:1px solid #8b9cb0;border-right:1px solid #c0ccd8;background:linear-gradient(#f4f6fb,#e3eaf5 50%,#cddbee)"></div>
<svg style="left:274px;top:495px" width="10" height="6"><path d="M0 0 L10 0 L5 5 Z" fill="#262626"/></svg>
<div class="t" style="left:316.04px;top:487.00px;font-size:12px;font-weight:normal;color:#101018;transform:scaleX(0.9000);">1.4</div>
<div class="t" style="left:369.59px;top:487.00px;font-size:12px;font-weight:normal;color:#101018;transform:scaleX(0.9000);">1.0</div>
<div class="t" style="left:407.33px;top:487.00px;font-size:12px;font-weight:normal;color:#101018;transform:scaleX(0.9000);">3.9</div>
<div class="t" style="left:452.78px;top:487.00px;font-size:12px;font-weight:normal;color:#101018;transform:scaleX(0.9000);">0.0</div>
<div class="t" style="left:516.27px;top:487.00px;font-size:12px;font-weight:normal;color:#101018;transform:scaleX(0.9038);">59.6</div>
<div class="t" style="left:587.21px;top:487.00px;font-size:12px;font-weight:normal;color:#101018;transform:scaleX(0.9453);">90.0</div>
<div style="left:6px;top:506px;width:22px;height:17px;background:#00ff00"></div>
<div style="left:29px;top:506px;width:58px;height:17px;background:#c8c8c8"></div>
<div style="left:88px;top:506px;width:79px;height:17px;background:#fff"></div>
<div style="left:168px;top:506px;width:121px;height:17px;background:#fff"></div>
<div style="left:290px;top:506px;width:67px;height:17px;background:#fff"></div>
<div style="left:358px;top:506px;width:38px;height:17px;background:#fff"></div>
<div style="left:397px;top:506px;width:35px;height:17px;background:#fff"></div>
<div style="left:433px;top:506px;width:54px;height:17px;background:#fff"></div>
<div style="left:488px;top:506px;width:77px;height:17px;background:#c8c8c8"></div>
<div style="left:566px;top:506px;width:64px;height:17px;background:#c8c8c8"></div>
<div class="t" style="left:11.12px;top:505.00px;font-size:12px;font-weight:normal;color:#101018;transform:scaleX(0.9000);">15</div>
<div class="t r" style="left:88.81px;top:505.00px;font-size:12px;font-weight:normal;color:#101018;transform:scaleX(1.0015);">Dielectric</div>
<div style="left:147px;top:506px;width:20px;height:17px;box-sizing:border-box;border-left:1px solid #8b9cb0;border-right:1px solid #c0ccd8;background:linear-gradient(#f4f6fb,#e3eaf5 50%,#cddbee)"></div>
<svg style="left:152px;top:513px" width="10" height="6"><path d="M0 0 L10 0 L5 5 Z" fill="#262626"/></svg>
<div class="t r" style="left:168.90px;top:505.00px;font-size:12px;font-weight:normal;color:#101018;transform:scaleX(0.9123);">FR-4</div>
<div style="left:269px;top:506px;width:20px;height:17px;box-sizing:border-box;border-left:1px solid #8b9cb0;border-right:1px solid #c0ccd8;background:linear-gradient(#f4f6fb,#e3eaf5 50%,#cddbee)"></div>
<svg style="left:274px;top:513px" width="10" height="6"><path d="M0 0 L10 0 L5 5 Z" fill="#262626"/></svg>
<div class="t" style="left:316.39px;top:505.00px;font-size:12px;font-weight:normal;color:#101018;transform:scaleX(0.9000);">4.5</div>
<div class="t" style="left:369.59px;top:505.00px;font-size:12px;font-weight:normal;color:#101018;transform:scaleX(0.9000);">1.0</div>
<div class="t" style="left:407.33px;top:505.00px;font-size:12px;font-weight:normal;color:#101018;transform:scaleX(0.9000);">3.9</div>
<div class="t" style="left:452.78px;top:505.00px;font-size:12px;font-weight:normal;color:#101018;transform:scaleX(0.9000);">0.0</div>
<div style="left:6px;top:524px;width:22px;height:17px;background:#ffff00"></div>
<div style="left:29px;top:524px;width:58px;height:17px;background:#fff"></div>
<div style="left:88px;top:524px;width:79px;height:17px;background:#fff"></div>
<div style="left:168px;top:524px;width:121px;height:17px;background:#fff"></div>
<div style="left:290px;top:524px;width:67px;height:17px;background:#fff"></div>
<div style="left:358px;top:524px;width:38px;height:17px;background:#fff"></div>
<div style="left:397px;top:524px;width:35px;height:17px;background:#fff"></div>
<div style="left:433px;top:524px;width:54px;height:17px;background:#fff"></div>
<div style="left:488px;top:524px;width:77px;height:17px;background:#fff"></div>
<div style="left:566px;top:524px;width:64px;height:17px;background:#fff"></div>
<div class="t" style="left:11.13px;top:523.00px;font-size:12px;font-weight:normal;color:#101018;transform:scaleX(0.9000);">16</div>
<div class="t r" style="left:30.23px;top:523.00px;font-size:12px;font-weight:normal;color:#101018;transform:scaleX(0.9809);">BOTTOM</div>
<div class="t r" style="left:89.27px;top:523.00px;font-size:12px;font-weight:normal;color:#101018;transform:scaleX(0.9747);">Signal</div>
<div style="left:147px;top:524px;width:20px;height:17px;box-sizing:border-box;border-left:1px solid #8b9cb0;border-right:1px solid #c0ccd8;background:linear-gradient(#f4f6fb,#e3eaf5 50%,#cddbee)"></div>
<svg style="left:152px;top:531px" width="10" height="6"><path d="M0 0 L10 0 L5 5 Z" fill="#262626"/></svg>
<div class="t r" style="left:169.28px;top:523.00px;font-size:12px;font-weight:normal;color:#101018;transform:scaleX(0.8727);">COPPER</div>
<div style="left:269px;top:524px;width:20px;height:17px;box-sizing:border-box;border-left:1px solid #8b9cb0;border-right:1px solid #c0ccd8;background:linear-gradient(#f4f6fb,#e3eaf5 50%,#cddbee)"></div>
<svg style="left:274px;top:531px" width="10" height="6"><path d="M0 0 L10 0 L5 5 Z" fill="#262626"/></svg>
<div class="t" style="left:316.28px;top:523.00px;font-size:12px;font-weight:normal;color:#101018;transform:scaleX(0.9000);">2.1</div>
<div class="t" style="left:369.59px;top:523.00px;font-size:12px;font-weight:normal;color:#101018;transform:scaleX(0.9000);">1.0</div>
<div class="t" style="left:407.32px;top:523.00px;font-size:12px;font-weight:normal;color:#101018;transform:scaleX(0.9000);">3.6</div>
<div class="t" style="left:452.78px;top:523.00px;font-size:12px;font-weight:normal;color:#101018;transform:scaleX(0.9000);">0.0</div>
<div class="t" style="left:516.27px;top:523.00px;font-size:12px;font-weight:normal;color:#101018;transform:scaleX(0.9038);">59.6</div>
<div class="t" style="left:587.21px;top:523.00px;font-size:12px;font-weight:normal;color:#101018;transform:scaleX(0.9453);">90.0</div>
<div style="left:652px;top:96px;width:8px;height:460px;background:#f5f5f5"></div>
<div style="left:655px;top:108px;width:1px;height:1px;background:#7c7c7c"></div>
<div style="left:657px;top:110px;width:1px;height:1px;background:#7c7c7c"></div>
<div style="left:655px;top:112px;width:1px;height:1px;background:#7c7c7c"></div>
<div style="left:657px;top:114px;width:1px;height:1px;background:#7c7c7c"></div>
<div style="left:655px;top:116px;width:1px;height:1px;background:#7c7c7c"></div>
<div style="left:657px;top:118px;width:1px;height:1px;background:#7c7c7c"></div>
<div style="left:655px;top:120px;width:1px;height:1px;background:#7c7c7c"></div>
<div style="left:657px;top:122px;width:1px;height:1px;background:#7c7c7c"></div>
<div style="left:655px;top:124px;width:1px;height:1px;background:#7c7c7c"></div>
<div style="left:657px;top:126px;width:1px;height:1px;background:#7c7c7c"></div>
<div style="left:655px;top:128px;width:1px;height:1px;background:#7c7c7c"></div>
<div style="left:657px;top:130px;width:1px;height:1px;background:#7c7c7c"></div>
<div style="left:655px;top:132px;width:1px;height:1px;background:#7c7c7c"></div>
<div style="left:657px;top:134px;width:1px;height:1px;background:#7c7c7c"></div>
<div style="left:655px;top:136px;width:1px;height:1px;background:#7c7c7c"></div>
<div style="left:657px;top:138px;width:1px;height:1px;background:#7c7c7c"></div>
<div style="left:655px;top:140px;width:1px;height:1px;background:#7c7c7c"></div>
<div style="left:657px;top:142px;width:1px;height:1px;background:#7c7c7c"></div>
<div style="left:655px;top:144px;width:1px;height:1px;background:#7c7c7c"></div>
<div style="left:657px;top:146px;width:1px;height:1px;background:#7c7c7c"></div>
<div style="left:655px;top:148px;width:1px;height:1px;background:#7c7c7c"></div>
<div style="left:657px;top:150px;width:1px;height:1px;background:#7c7c7c"></div>
<div style="left:655px;top:152px;width:1px;height:1px;background:#7c7c7c"></div>
<div style="left:657px;top:154px;width:1px;height:1px;background:#7c7c7c"></div>
<div style="left:655px;top:156px;width:1px;height:1px;background:#7c7c7c"></div>
<div style="left:657px;top:158px;width:1px;height:1px;background:#7c7c7c"></div>
<div style="left:655px;top:160px;width:1px;height:1px;background:#7c7c7c"></div>
<div style="left:657px;top:162px;width:1px;height:1px;background:#7c7c7c"></div>
<div style="left:655px;top:164px;width:1px;height:1px;background:#7c7c7c"></div>
<div style="left:657px;top:166px;width:1px;height:1px;background:#7c7c7c"></div>
<div style="left:655px;top:168px;width:1px;height:1px;background:#7c7c7c"></div>
<div style="left:657px;top:170px;width:1px;height:1px;background:#7c7c7c"></div>
<div style="left:655px;top:172px;width:1px;height:1px;background:#7c7c7c"></div>
<div style="left:657px;top:174px;width:1px;height:1px;background:#7c7c7c"></div>
<div style="left:655px;top:176px;width:1px;height:1px;background:#7c7c7c"></div>
<div style="left:657px;top:178px;width:1px;height:1px;background:#7c7c7c"></div>
<div style="left:655px;top:180px;width:1px;height:1px;background:#7c7c7c"></div>
<div style="left:657px;top:182px;width:1px;height:1px;background:#7c7c7c"></div>
<div style="left:655px;top:184px;width:1px;height:1px;background:#7c7c7c"></div>
<div style="left:657px;top:186px;width:1px;height:1px;background:#7c7c7c"></div>
<div style="left:655px;top:188px;width:1px;height:1px;background:#7c7c7c"></div>
<div style="left:657px;top:190px;width:1px;height:1px;background:#7c7c7c"></div>
<div style="left:655px;top:192px;width:1px;height:1px;background:#7c7c7c"></div>
<div style="left:657px;top:194px;width:1px;height:1px;background:#7c7c7c"></div>
<div style="left:655px;top:196px;width:1px;height:1px;background:#7c7c7c"></div>
<div style="left:657px;top:198px;width:1px;height:1px;background:#7c7c7c"></div>
<div style="left:655px;top:200px;width:1px;height:1px;background:#7c7c7c"></div>
<div style="left:657px;top:202px;width:1px;height:1px;background:#7c7c7c"></div>
<div style="left:655px;top:204px;width:1px;height:1px;background:#7c7c7c"></div>
<div style="left:657px;top:206px;width:1px;height:1px;background:#7c7c7c"></div>
<div style="left:655px;top:208px;width:1px;height:1px;background:#7c7c7c"></div>
<div style="left:657px;top:210px;width:1px;height:1px;background:#7c7c7c"></div>
<div style="left:655px;top:212px;width:1px;height:1px;background:#7c7c7c"></div>
<div style="left:657px;top:214px;width:1px;height:1px;background:#7c7c7c"></div>
<div style="left:655px;top:216px;width:1px;height:1px;background:#7c7c7c"></div>
<div style="left:657px;top:218px;width:1px;height:1px;background:#7c7c7c"></div>
<div style="left:655px;top:220px;width:1px;height:1px;background:#7c7c7c"></div>
<div style="left:657px;top:222px;width:1px;height:1px;background:#7c7c7c"></div>
<div style="left:655px;top:224px;width:1px;height:1px;background:#7c7c7c"></div>
<div style="left:657px;top:226px;width:1px;height:1px;background:#7c7c7c"></div>
<div style="left:655px;top:228px;width:1px;height:1px;background:#7c7c7c"></div>
<div style="left:657px;top:230px;width:1px;height:1px;background:#7c7c7c"></div>
<div style="left:655px;top:232px;width:1px;height:1px;background:#7c7c7c"></div>
<div style="left:657px;top:234px;width:1px;height:1px;background:#7c7c7c"></div>
<div style="left:655px;top:236px;width:1px;height:1px;background:#7c7c7c"></div>
<div style="left:657px;top:238px;width:1px;height:1px;background:#7c7c7c"></div>
<div style="left:655px;top:240px;width:1px;height:1px;background:#7c7c7c"></div>
<div style="left:657px;top:242px;width:1px;height:1px;background:#7c7c7c"></div>
<div style="left:655px;top:244px;width:1px;height:1px;background:#7c7c7c"></div>
<div style="left:657px;top:246px;width:1px;height:1px;background:#7c7c7c"></div>
<div style="left:655px;top:248px;width:1px;height:1px;background:#7c7c7c"></div>
<div style="left:657px;top:250px;width:1px;height:1px;background:#7c7c7c"></div>
<div style="left:655px;top:252px;width:1px;height:1px;background:#7c7c7c"></div>
<div style="left:657px;top:254px;width:1px;height:1px;background:#7c7c7c"></div>
<div style="left:655px;top:256px;width:1px;height:1px;background:#7c7c7c"></div>
<div style="left:657px;top:258px;width:1px;height:1px;background:#7c7c7c"></div>
<div style="left:655px;top:260px;width:1px;height:1px;background:#7c7c7c"></div>
<div style="left:657px;top:262px;width:1px;height:1px;background:#7c7c7c"></div>
<div style="left:655px;top:264px;width:1px;height:1px;background:#7c7c7c"></div>
<div style="left:657px;top:266px;width:1px;height:1px;background:#7c7c7c"></div>
<div style="left:655px;top:268px;width:1px;height:1px;background:#7c7c7c"></div>
<div style="left:657px;top:270px;width:1px;height:1px;background:#7c7c7c"></div>
<div style="left:655px;top:272px;width:1px;height:1px;background:#7c7c7c"></div>
<div style="left:657px;top:274px;width:1px;height:1px;background:#7c7c7c"></div>
<div style="left:655px;top:276px;width:1px;height:1px;background:#7c7c7c"></div>
<div style="left:657px;top:278px;width:1px;height:1px;background:#7c7c7c"></div>
<div style="left:655px;top:280px;width:1px;height:1px;background:#7c7c7c"></div>
<div style="left:657px;top:282px;width:1px;height:1px;background:#7c7c7c"></div>
<div style="left:655px;top:284px;width:1px;height:1px;background:#7c7c7c"></div>
<div style="left:657px;top:286px;width:1px;height:1px;background:#7c7c7c"></div>
<div style="left:655px;top:288px;width:1px;height:1px;background:#7c7c7c"></div>
<div style="left:657px;top:290px;width:1px;height:1px;background:#7c7c7c"></div>
<div style="left:655px;top:292px;width:1px;height:1px;background:#7c7c7c"></div>
<div style="left:657px;top:294px;width:1px;height:1px;background:#7c7c7c"></div>
<div style="left:655px;top:296px;width:1px;height:1px;background:#7c7c7c"></div>
<div style="left:657px;top:298px;width:1px;height:1px;background:#7c7c7c"></div>
<div style="left:655px;top:300px;width:1px;height:1px;background:#7c7c7c"></div>
<div style="left:657px;top:302px;width:1px;height:1px;background:#7c7c7c"></div>
<div style="left:655px;top:304px;width:1px;height:1px;background:#7c7c7c"></div>
<div style="left:657px;top:306px;width:1px;height:1px;background:#7c7c7c"></div>
<div style="left:655px;top:308px;width:1px;height:1px;background:#7c7c7c"></div>
<div style="left:657px;top:310px;width:1px;height:1px;background:#7c7c7c"></div>
<div style="left:655px;top:312px;width:1px;height:1px;background:#7c7c7c"></div>
<div style="left:657px;top:314px;width:1px;height:1px;background:#7c7c7c"></div>
<div style="left:655px;top:316px;width:1px;height:1px;background:#7c7c7c"></div>
<div style="left:657px;top:318px;width:1px;height:1px;background:#7c7c7c"></div>
<div style="left:655px;top:320px;width:1px;height:1px;background:#7c7c7c"></div>
<div style="left:657px;top:322px;width:1px;height:1px;background:#7c7c7c"></div>
<div style="left:655px;top:324px;width:1px;height:1px;background:#7c7c7c"></div>
<div style="left:657px;top:326px;width:1px;height:1px;background:#7c7c7c"></div>
<div style="left:655px;top:328px;width:1px;height:1px;background:#7c7c7c"></div>
<div style="left:657px;top:330px;width:1px;height:1px;background:#7c7c7c"></div>
<div style="left:655px;top:332px;width:1px;height:1px;background:#7c7c7c"></div>
<div style="left:657px;top:334px;width:1px;height:1px;background:#7c7c7c"></div>
<div style="left:655px;top:336px;width:1px;height:1px;background:#7c7c7c"></div>
<div style="left:657px;top:338px;width:1px;height:1px;background:#7c7c7c"></div>
<div style="left:655px;top:340px;width:1px;height:1px;background:#7c7c7c"></div>
<div style="left:657px;top:342px;width:1px;height:1px;background:#7c7c7c"></div>
<div style="left:655px;top:344px;width:1px;height:1px;background:#7c7c7c"></div>
<div style="left:657px;top:346px;width:1px;height:1px;background:#7c7c7c"></div>
<div style="left:655px;top:348px;width:1px;height:1px;background:#7c7c7c"></div>
<div style="left:657px;top:350px;width:1px;height:1px;background:#7c7c7c"></div>
<div style="left:655px;top:352px;width:1px;height:1px;background:#7c7c7c"></div>
<div style="left:657px;top:354px;width:1px;height:1px;background:#7c7c7c"></div>
<div style="left:655px;top:356px;width:1px;height:1px;background:#7c7c7c"></div>
<div style="left:657px;top:358px;width:1px;height:1px;background:#7c7c7c"></div>
<div style="left:655px;top:360px;width:1px;height:1px;background:#7c7c7c"></div>
<div style="left:657px;top:362px;width:1px;height:1px;background:#7c7c7c"></div>
<div style="left:655px;top:364px;width:1px;height:1px;background:#7c7c7c"></div>
<div style="left:657px;top:366px;width:1px;height:1px;background:#7c7c7c"></div>
<div style="left:655px;top:368px;width:1px;height:1px;background:#7c7c7c"></div>
<div style="left:657px;top:370px;width:1px;height:1px;background:#7c7c7c"></div>
<div style="left:655px;top:372px;width:1px;height:1px;background:#7c7c7c"></div>
<div style="left:657px;top:374px;width:1px;height:1px;background:#7c7c7c"></div>
<div style="left:655px;top:376px;width:1px;height:1px;background:#7c7c7c"></div>
<div style="left:657px;top:378px;width:1px;height:1px;background:#7c7c7c"></div>
<div style="left:655px;top:380px;width:1px;height:1px;background:#7c7c7c"></div>
<div style="left:657px;top:382px;width:1px;height:1px;background:#7c7c7c"></div>
<div style="left:655px;top:384px;width:1px;height:1px;background:#7c7c7c"></div>
<div style="left:657px;top:386px;width:1px;height:1px;background:#7c7c7c"></div>
<div style="left:655px;top:388px;width:1px;height:1px;background:#7c7c7c"></div>
<div style="left:657px;top:390px;width:1px;height:1px;background:#7c7c7c"></div>
<div style="left:655px;top:392px;width:1px;height:1px;background:#7c7c7c"></div>
<div style="left:657px;top:394px;width:1px;height:1px;background:#7c7c7c"></div>
<div style="left:655px;top:396px;width:1px;height:1px;background:#7c7c7c"></div>
<div style="left:657px;top:398px;width:1px;height:1px;background:#7c7c7c"></div>
<div style="left:655px;top:400px;width:1px;height:1px;background:#7c7c7c"></div>
<div style="left:657px;top:402px;width:1px;height:1px;background:#7c7c7c"></div>
<div style="left:655px;top:404px;width:1px;height:1px;background:#7c7c7c"></div>
<div style="left:657px;top:406px;width:1px;height:1px;background:#7c7c7c"></div>
<div style="left:655px;top:408px;width:1px;height:1px;background:#7c7c7c"></div>
<div style="left:657px;top:410px;width:1px;height:1px;background:#7c7c7c"></div>
<div style="left:655px;top:412px;width:1px;height:1px;background:#7c7c7c"></div>
<div style="left:657px;top:414px;width:1px;height:1px;background:#7c7c7c"></div>
<div style="left:655px;top:416px;width:1px;height:1px;background:#7c7c7c"></div>
<div style="left:657px;top:418px;width:1px;height:1px;background:#7c7c7c"></div>
<div style="left:655px;top:420px;width:1px;height:1px;background:#7c7c7c"></div>
<div style="left:657px;top:422px;width:1px;height:1px;background:#7c7c7c"></div>
<div style="left:655px;top:424px;width:1px;height:1px;background:#7c7c7c"></div>
<div style="left:657px;top:426px;width:1px;height:1px;background:#7c7c7c"></div>
<div style="left:655px;top:428px;width:1px;height:1px;background:#7c7c7c"></div>
<div style="left:657px;top:430px;width:1px;height:1px;background:#7c7c7c"></div>
<div style="left:655px;top:432px;width:1px;height:1px;background:#7c7c7c"></div>
<div style="left:657px;top:434px;width:1px;height:1px;background:#7c7c7c"></div>
<div style="left:655px;top:436px;width:1px;height:1px;background:#7c7c7c"></div>
<div style="left:657px;top:438px;width:1px;height:1px;background:#7c7c7c"></div>
<div style="left:655px;top:440px;width:1px;height:1px;background:#7c7c7c"></div>
<div style="left:657px;top:442px;width:1px;height:1px;background:#7c7c7c"></div>
<div style="left:655px;top:444px;width:1px;height:1px;background:#7c7c7c"></div>
<div style="left:657px;top:446px;width:1px;height:1px;background:#7c7c7c"></div>
<div style="left:655px;top:448px;width:1px;height:1px;background:#7c7c7c"></div>
<div style="left:657px;top:450px;width:1px;height:1px;background:#7c7c7c"></div>
<div style="left:655px;top:452px;width:1px;height:1px;background:#7c7c7c"></div>
<div style="left:657px;top:454px;width:1px;height:1px;background:#7c7c7c"></div>
<div style="left:655px;top:456px;width:1px;height:1px;background:#7c7c7c"></div>
<div style="left:657px;top:458px;width:1px;height:1px;background:#7c7c7c"></div>
<div style="left:655px;top:460px;width:1px;height:1px;background:#7c7c7c"></div>
<div style="left:657px;top:462px;width:1px;height:1px;background:#7c7c7c"></div>
<div style="left:655px;top:464px;width:1px;height:1px;background:#7c7c7c"></div>
<div style="left:657px;top:466px;width:1px;height:1px;background:#7c7c7c"></div>
<div style="left:655px;top:468px;width:1px;height:1px;background:#7c7c7c"></div>
<div style="left:657px;top:470px;width:1px;height:1px;background:#7c7c7c"></div>
<div style="left:655px;top:472px;width:1px;height:1px;background:#7c7c7c"></div>
<div style="left:657px;top:474px;width:1px;height:1px;background:#7c7c7c"></div>
<div style="left:655px;top:476px;width:1px;height:1px;background:#7c7c7c"></div>
<div style="left:657px;top:478px;width:1px;height:1px;background:#7c7c7c"></div>
<div style="left:655px;top:480px;width:1px;height:1px;background:#7c7c7c"></div>
<div style="left:657px;top:482px;width:1px;height:1px;background:#7c7c7c"></div>
<div style="left:655px;top:484px;width:1px;height:1px;background:#7c7c7c"></div>
<div style="left:657px;top:486px;width:1px;height:1px;background:#7c7c7c"></div>
<div style="left:655px;top:488px;width:1px;height:1px;background:#7c7c7c"></div>
<div style="left:657px;top:490px;width:1px;height:1px;background:#7c7c7c"></div>
<div style="left:655px;top:492px;width:1px;height:1px;background:#7c7c7c"></div>
<div style="left:657px;top:494px;width:1px;height:1px;background:#7c7c7c"></div>
<div style="left:655px;top:496px;width:1px;height:1px;background:#7c7c7c"></div>
<div style="left:657px;top:498px;width:1px;height:1px;background:#7c7c7c"></div>
<div style="left:655px;top:500px;width:1px;height:1px;background:#7c7c7c"></div>
<div style="left:657px;top:502px;width:1px;height:1px;background:#7c7c7c"></div>
<div style="left:655px;top:504px;width:1px;height:1px;background:#7c7c7c"></div>
<div style="left:657px;top:506px;width:1px;height:1px;background:#7c7c7c"></div>
<div style="left:655px;top:508px;width:1px;height:1px;background:#7c7c7c"></div>
<div style="left:657px;top:510px;width:1px;height:1px;background:#7c7c7c"></div>
<div style="left:655px;top:512px;width:1px;height:1px;background:#7c7c7c"></div>
<div style="left:657px;top:514px;width:1px;height:1px;background:#7c7c7c"></div>
<div style="left:655px;top:516px;width:1px;height:1px;background:#7c7c7c"></div>
<div style="left:657px;top:518px;width:1px;height:1px;background:#7c7c7c"></div>
<div style="left:655px;top:520px;width:1px;height:1px;background:#7c7c7c"></div>
<div style="left:657px;top:522px;width:1px;height:1px;background:#7c7c7c"></div>
<div style="left:655px;top:524px;width:1px;height:1px;background:#7c7c7c"></div>
<div style="left:657px;top:526px;width:1px;height:1px;background:#7c7c7c"></div>
<div style="left:655px;top:528px;width:1px;height:1px;background:#7c7c7c"></div>
<div style="left:657px;top:530px;width:1px;height:1px;background:#7c7c7c"></div>
<div style="left:655px;top:532px;width:1px;height:1px;background:#7c7c7c"></div>
<div style="left:657px;top:534px;width:1px;height:1px;background:#7c7c7c"></div>
<div style="left:655px;top:536px;width:1px;height:1px;background:#7c7c7c"></div>
<div style="left:657px;top:538px;width:1px;height:1px;background:#7c7c7c"></div>
<div style="left:655px;top:540px;width:1px;height:1px;background:#7c7c7c"></div>
<div style="left:657px;top:542px;width:1px;height:1px;background:#7c7c7c"></div>
<div style="left:655px;top:544px;width:1px;height:1px;background:#7c7c7c"></div>
<div style="left:657px;top:546px;width:1px;height:1px;background:#7c7c7c"></div>
<div style="left:655px;top:548px;width:1px;height:1px;background:#7c7c7c"></div>
<div style="left:657px;top:550px;width:1px;height:1px;background:#7c7c7c"></div>
<div style="left:655px;top:552px;width:1px;height:1px;background:#7c7c7c"></div>
<div style="left:657px;top:554px;width:1px;height:1px;background:#7c7c7c"></div>
<svg style="left:652px;top:99px" width="7" height="22" viewBox="0 0 7 22"><path d="M5 1 L1 5 L5 9 Z" fill="#5b7fc1"/><path d="M5 1 L1 5" stroke="#1a1a1a" stroke-width="1.2"/><path d="M1 13 L5 17 L1 21 Z" fill="#5b7fc1"/><path d="M1.5 13 L1.5 21" stroke="#1a1a1a" stroke-width="1"/></svg>
<div style="left:660px;top:96px;width:320px;height:460px;background:#ededed"></div>
<div style="left:660px;top:96px;width:320px;height:3px;background:#8191a1"></div>
<div style="left:660px;top:96px;width:3px;height:460px;background:#8191a1"></div>
<div style="left:977px;top:99px;width:3px;height:456px;background:#f8f8f8"></div>
<div style="left:665px;top:106px;width:311px;height:179px;box-sizing:border-box;border:2px solid #9a9a9a"></div>
<div style="left:667px;top:108px;width:307px;height:175px;box-sizing:border-box;border-left:1px solid #fbfbfb;border-top:1px solid #fbfbfb"></div>
<div style="left:670.0px;top:104px;width:111.0px;height:6px;background:#ededed"></div>
<div class="t" style="left:671.71px;top:98.00px;font-size:12px;font-weight:bold;color:#1c1c28;transform:scaleX(0.9718);">Back Drill Behavior</div>
<div style="left:663px;top:287px;width:317px;height:9px;background:#f4f4f4"></div>
<div style="left:663px;top:287px;width:317px;height:1px;background:#ffffff"></div>
<div style="left:674px;top:291px;width:1px;height:1px;background:#7c7c7c"></div>
<div style="left:678px;top:291px;width:1px;height:1px;background:#7c7c7c"></div>
<div style="left:682px;top:291px;width:1px;height:1px;background:#7c7c7c"></div>
<div style="left:686px;top:291px;width:1px;height:1px;background:#7c7c7c"></div>
<div style="left:690px;top:291px;width:1px;height:1px;background:#7c7c7c"></div>
<div style="left:694px;top:291px;width:1px;height:1px;background:#7c7c7c"></div>
<div style="left:698px;top:291px;width:1px;height:1px;background:#7c7c7c"></div>
<div style="left:702px;top:291px;width:1px;height:1px;background:#7c7c7c"></div>
<div style="left:706px;top:291px;width:1px;height:1px;background:#7c7c7c"></div>
<div style="left:710px;top:291px;width:1px;height:1px;background:#7c7c7c"></div>
<div style="left:714px;top:291px;width:1px;height:1px;background:#7c7c7c"></div>
<div style="left:718px;top:291px;width:1px;height:1px;background:#7c7c7c"></div>
<div style="left:722px;top:291px;width:1px;height:1px;background:#7c7c7c"></div>
<div style="left:726px;top:291px;width:1px;height:1px;background:#7c7c7c"></div>
<div style="left:730px;top:291px;width:1px;height:1px;background:#7c7c7c"></div>
<div style="left:734px;top:291px;width:1px;height:1px;background:#7c7c7c"></div>
<div style="left:738px;top:291px;width:1px;height:1px;background:#7c7c7c"></div>
<div style="left:742px;top:291px;width:1px;height:1px;background:#7c7c7c"></div>
<div style="left:746px;top:291px;width:1px;height:1px;background:#7c7c7c"></div>
<div style="left:750px;top:291px;width:1px;height:1px;background:#7c7c7c"></div>
<div style="left:754px;top:291px;width:1px;height:1px;background:#7c7c7c"></div>
<div style="left:758px;top:291px;width:1px;height:1px;background:#7c7c7c"></div>
<div style="left:762px;top:291px;width:1px;height:1px;background:#7c7c7c"></div>
<div style="left:766px;top:291px;width:1px;height:1px;background:#7c7c7c"></div>
<div style="left:770px;top:291px;width:1px;height:1px;background:#7c7c7c"></div>
<div style="left:774px;top:291px;width:1px;height:1px;background:#7c7c7c"></div>
<div style="left:778px;top:291px;width:1px;height:1px;background:#7c7c7c"></div>
<div style="left:782px;top:291px;width:1px;height:1px;background:#7c7c7c"></div>
<div style="left:786px;top:291px;width:1px;height:1px;background:#7c7c7c"></div>
<div style="left:790px;top:291px;width:1px;height:1px;background:#7c7c7c"></div>
<div style="left:794px;top:291px;width:1px;height:1px;background:#7c7c7c"></div>
<div style="left:798px;top:291px;width:1px;height:1px;background:#7c7c7c"></div>
<div style="left:802px;top:291px;width:1px;height:1px;background:#7c7c7c"></div>
<div style="left:806px;top:291px;width:1px;height:1px;background:#7c7c7c"></div>
<div style="left:810px;top:291px;width:1px;height:1px;background:#7c7c7c"></div>
<div style="left:814px;top:291px;width:1px;height:1px;background:#7c7c7c"></div>
<div style="left:818px;top:291px;width:1px;height:1px;background:#7c7c7c"></div>
<div style="left:822px;top:291px;width:1px;height:1px;background:#7c7c7c"></div>
<div style="left:826px;top:291px;width:1px;height:1px;background:#7c7c7c"></div>
<div style="left:830px;top:291px;width:1px;height:1px;background:#7c7c7c"></div>
<div style="left:834px;top:291px;width:1px;height:1px;background:#7c7c7c"></div>
<div style="left:838px;top:291px;width:1px;height:1px;background:#7c7c7c"></div>
<div style="left:842px;top:291px;width:1px;height:1px;background:#7c7c7c"></div>
<div style="left:846px;top:291px;width:1px;height:1px;background:#7c7c7c"></div>
<div style="left:850px;top:291px;width:1px;height:1px;background:#7c7c7c"></div>
<div style="left:854px;top:291px;width:1px;height:1px;background:#7c7c7c"></div>
<div style="left:858px;top:291px;width:1px;height:1px;background:#7c7c7c"></div>
<div style="left:862px;top:291px;width:1px;height:1px;background:#7c7c7c"></div>
<div style="left:866px;top:291px;width:1px;height:1px;background:#7c7c7c"></div>
<div style="left:870px;top:291px;width:1px;height:1px;background:#7c7c7c"></div>
<div style="left:874px;top:291px;width:1px;height:1px;background:#7c7c7c"></div>
<div style="left:878px;top:291px;width:1px;height:1px;background:#7c7c7c"></div>
<div style="left:882px;top:291px;width:1px;height:1px;background:#7c7c7c"></div>
<div style="left:886px;top:291px;width:1px;height:1px;background:#7c7c7c"></div>
<div style="left:890px;top:291px;width:1px;height:1px;background:#7c7c7c"></div>
<div style="left:894px;top:291px;width:1px;height:1px;background:#7c7c7c"></div>
<div style="left:898px;top:291px;width:1px;height:1px;background:#7c7c7c"></div>
<div style="left:902px;top:291px;width:1px;height:1px;background:#7c7c7c"></div>
<div style="left:906px;top:291px;width:1px;height:1px;background:#7c7c7c"></div>
<div style="left:910px;top:291px;width:1px;height:1px;background:#7c7c7c"></div>
<div style="left:914px;top:291px;width:1px;height:1px;background:#7c7c7c"></div>
<div style="left:918px;top:291px;width:1px;height:1px;background:#7c7c7c"></div>
<div style="left:922px;top:291px;width:1px;height:1px;background:#7c7c7c"></div>
<div style="left:926px;top:291px;width:1px;height:1px;background:#7c7c7c"></div>
<div style="left:930px;top:291px;width:1px;height:1px;background:#7c7c7c"></div>
<div style="left:934px;top:291px;width:1px;height:1px;background:#7c7c7c"></div>
<div style="left:938px;top:291px;width:1px;height:1px;background:#7c7c7c"></div>
<div style="left:942px;top:291px;width:1px;height:1px;background:#7c7c7c"></div>
<div style="left:946px;top:291px;width:1px;height:1px;background:#7c7c7c"></div>
<div style="left:950px;top:291px;width:1px;height:1px;background:#7c7c7c"></div>
<div style="left:954px;top:291px;width:1px;height:1px;background:#7c7c7c"></div>
<div style="left:958px;top:291px;width:1px;height:1px;background:#7c7c7c"></div>
<div style="left:962px;top:291px;width:1px;height:1px;background:#7c7c7c"></div>
<div style="left:966px;top:291px;width:1px;height:1px;background:#7c7c7c"></div>
<div style="left:970px;top:291px;width:1px;height:1px;background:#7c7c7c"></div>
<div style="left:974px;top:291px;width:1px;height:1px;background:#7c7c7c"></div>
<div style="left:978px;top:291px;width:1px;height:1px;background:#7c7c7c"></div>
<div style="left:676px;top:293px;width:1px;height:1px;background:#7c7c7c"></div>
<div style="left:680px;top:293px;width:1px;height:1px;background:#7c7c7c"></div>
<div style="left:684px;top:293px;width:1px;height:1px;background:#7c7c7c"></div>
<div style="left:688px;top:293px;width:1px;height:1px;background:#7c7c7c"></div>
<div style="left:692px;top:293px;width:1px;height:1px;background:#7c7c7c"></div>
<div style="left:696px;top:293px;width:1px;height:1px;background:#7c7c7c"></div>
<div style="left:700px;top:293px;width:1px;height:1px;background:#7c7c7c"></div>
<div style="left:704px;top:293px;width:1px;height:1px;background:#7c7c7c"></div>
<div style="left:708px;top:293px;width:1px;height:1px;background:#7c7c7c"></div>
<div style="left:712px;top:293px;width:1px;height:1px;background:#7c7c7c"></div>
<div style="left:716px;top:293px;width:1px;height:1px;background:#7c7c7c"></div>
<div style="left:720px;top:293px;width:1px;height:1px;background:#7c7c7c"></div>
<div style="left:724px;top:293px;width:1px;height:1px;background:#7c7c7c"></div>
<div style="left:728px;top:293px;width:1px;height:1px;background:#7c7c7c"></div>
<div style="left:732px;top:293px;width:1px;height:1px;background:#7c7c7c"></div>
<div style="left:736px;top:293px;width:1px;height:1px;background:#7c7c7c"></div>
<div style="left:740px;top:293px;width:1px;height:1px;background:#7c7c7c"></div>
<div style="left:744px;top:293px;width:1px;height:1px;background:#7c7c7c"></div>
<div style="left:748px;top:293px;width:1px;height:1px;background:#7c7c7c"></div>
<div style="left:752px;top:293px;width:1px;height:1px;background:#7c7c7c"></div>
<div style="left:756px;top:293px;width:1px;height:1px;background:#7c7c7c"></div>
<div style="left:760px;top:293px;width:1px;height:1px;background:#7c7c7c"></div>
<div style="left:764px;top:293px;width:1px;height:1px;background:#7c7c7c"></div>
<div style="left:768px;top:293px;width:1px;height:1px;background:#7c7c7c"></div>
<div style="left:772px;top:293px;width:1px;height:1px;background:#7c7c7c"></div>
<div style="left:776px;top:293px;width:1px;height:1px;background:#7c7c7c"></div>
<div style="left:780px;top:293px;width:1px;height:1px;background:#7c7c7c"></div>
<div style="left:784px;top:293px;width:1px;height:1px;background:#7c7c7c"></div>
<div style="left:788px;top:293px;width:1px;height:1px;background:#7c7c7c"></div>
<div style="left:792px;top:293px;width:1px;height:1px;background:#7c7c7c"></div>
<div style="left:796px;top:293px;width:1px;height:1px;background:#7c7c7c"></div>
<div style="left:800px;top:293px;width:1px;height:1px;background:#7c7c7c"></div>
<div style="left:804px;top:293px;width:1px;height:1px;background:#7c7c7c"></div>
<div style="left:808px;top:293px;width:1px;height:1px;background:#7c7c7c"></div>
<div style="left:812px;top:293px;width:1px;height:1px;background:#7c7c7c"></div>
<div style="left:816px;top:293px;width:1px;height:1px;background:#7c7c7c"></div>
<div style="left:820px;top:293px;width:1px;height:1px;background:#7c7c7c"></div>
<div style="left:824px;top:293px;width:1px;height:1px;background:#7c7c7c"></div>
<div style="left:828px;top:293px;width:1px;height:1px;background:#7c7c7c"></div>
<div style="left:832px;top:293px;width:1px;height:1px;background:#7c7c7c"></div>
<div style="left:836px;top:293px;width:1px;height:1px;background:#7c7c7c"></div>
<div style="left:840px;top:293px;width:1px;height:1px;background:#7c7c7c"></div>
<div style="left:844px;top:293px;width:1px;height:1px;background:#7c7c7c"></div>
<div style="left:848px;top:293px;width:1px;height:1px;background:#7c7c7c"></div>
<div style="left:852px;top:293px;width:1px;height:1px;background:#7c7c7c"></div>
<div style="left:856px;top:293px;width:1px;height:1px;background:#7c7c7c"></div>
<div style="left:860px;top:293px;width:1px;height:1px;background:#7c7c7c"></div>
<div style="left:864px;top:293px;width:1px;height:1px;background:#7c7c7c"></div>
<div style="left:868px;top:293px;width:1px;height:1px;background:#7c7c7c"></div>
<div style="left:872px;top:293px;width:1px;height:1px;background:#7c7c7c"></div>
<div style="left:876px;top:293px;width:1px;height:1px;background:#7c7c7c"></div>
<div style="left:880px;top:293px;width:1px;height:1px;background:#7c7c7c"></div>
<div style="left:884px;top:293px;width:1px;height:1px;background:#7c7c7c"></div>
<div style="left:888px;top:293px;width:1px;height:1px;background:#7c7c7c"></div>
<div style="left:892px;top:293px;width:1px;height:1px;background:#7c7c7c"></div>
<div style="left:896px;top:293px;width:1px;height:1px;background:#7c7c7c"></div>
<div style="left:900px;top:293px;width:1px;height:1px;background:#7c7c7c"></div>
<div style="left:904px;top:293px;width:1px;height:1px;background:#7c7c7c"></div>
<div style="left:908px;top:293px;width:1px;height:1px;background:#7c7c7c"></div>
<div style="left:912px;top:293px;width:1px;height:1px;background:#7c7c7c"></div>
<div style="left:916px;top:293px;width:1px;height:1px;background:#7c7c7c"></div>
<div style="left:920px;top:293px;width:1px;height:1px;background:#7c7c7c"></div>
<div style="left:924px;top:293px;width:1px;height:1px;background:#7c7c7c"></div>
<div style="left:928px;top:293px;width:1px;height:1px;background:#7c7c7c"></div>
<div style="left:932px;top:293px;width:1px;height:1px;background:#7c7c7c"></div>
<div style="left:936px;top:293px;width:1px;height:1px;background:#7c7c7c"></div>
<div style="left:940px;top:293px;width:1px;height:1px;background:#7c7c7c"></div>
<div style="left:944px;top:293px;width:1px;height:1px;background:#7c7c7c"></div>
<div style="left:948px;top:293px;width:1px;height:1px;background:#7c7c7c"></div>
<div style="left:952px;top:293px;width:1px;height:1px;background:#7c7c7c"></div>
<div style="left:956px;top:293px;width:1px;height:1px;background:#7c7c7c"></div>
<div style="left:960px;top:293px;width:1px;height:1px;background:#7c7c7c"></div>
<div style="left:964px;top:293px;width:1px;height:1px;background:#7c7c7c"></div>
<div style="left:968px;top:293px;width:1px;height:1px;background:#7c7c7c"></div>
<div style="left:972px;top:293px;width:1px;height:1px;background:#7c7c7c"></div>
<div style="left:976px;top:293px;width:1px;height:1px;background:#7c7c7c"></div>
<svg style="left:666px;top:289px" width="20" height="5" viewBox="0 0 20 5"><path d="M0 4.5 L4 0.5 L8 4.5 Z" fill="#5b7fc1"/><path d="M0.3 4.3 L4 0.6" stroke="#1a1a1a" stroke-width="1.1"/><path d="M12 0 L20 0 L16 4.5 Z" fill="#5b7fc1"/><path d="M12 0.5 L20 0.5" stroke="#1a1a1a" stroke-width="1"/></svg>
<div style="left:663px;top:296px;width:317px;height:1px;background:#8d9aa8"></div>
<div style="left:665px;top:304px;width:311px;height:104px;box-sizing:border-box;border:2px solid #9a9a9a"></div>
<div style="left:667px;top:306px;width:307px;height:100px;box-sizing:border-box;border-left:1px solid #fbfbfb;border-top:1px solid #fbfbfb"></div>
<div style="left:669.6px;top:302px;width:127.2px;height:6px;background:#ededed"></div>
<div class="t" style="left:671.30px;top:296.00px;font-size:12px;font-weight:bold;color:#1c1c28;transform:scaleX(0.9923);">Differential Extraction</div>
<div style="left:663px;top:410px;width:317px;height:9px;background:#f4f4f4"></div>
<div style="left:663px;top:410px;width:317px;height:1px;background:#ffffff"></div>
<div style="left:674px;top:414px;width:1px;height:1px;background:#7c7c7c"></div>
<div style="left:678px;top:414px;width:1px;height:1px;background:#7c7c7c"></div>
<div style="left:682px;top:414px;width:1px;height:1px;background:#7c7c7c"></div>
<div style="left:686px;top:414px;width:1px;height:1px;background:#7c7c7c"></div>
<div style="left:690px;top:414px;width:1px;height:1px;background:#7c7c7c"></div>
<div style="left:694px;top:414px;width:1px;height:1px;background:#7c7c7c"></div>
<div style="left:698px;top:414px;width:1px;height:1px;background:#7c7c7c"></div>
<div style="left:702px;top:414px;width:1px;height:1px;background:#7c7c7c"></div>
<div style="left:706px;top:414px;width:1px;height:1px;background:#7c7c7c"></div>
<div style="left:710px;top:414px;width:1px;height:1px;background:#7c7c7c"></div>
<div style="left:714px;top:414px;width:1px;height:1px;background:#7c7c7c"></div>
<div style="left:718px;top:414px;width:1px;height:1px;background:#7c7c7c"></div>
<div style="left:722px;top:414px;width:1px;height:1px;background:#7c7c7c"></div>
<div style="left:726px;top:414px;width:1px;height:1px;background:#7c7c7c"></div>
<div style="left:730px;top:414px;width:1px;height:1px;background:#7c7c7c"></div>
<div style="left:734px;top:414px;width:1px;height:1px;background:#7c7c7c"></div>
<div style="left:738px;top:414px;width:1px;height:1px;background:#7c7c7c"></div>
<div style="left:742px;top:414px;width:1px;height:1px;background:#7c7c7c"></div>
<div style="left:746px;top:414px;width:1px;height:1px;background:#7c7c7c"></div>
<div style="left:750px;top:414px;width:1px;height:1px;background:#7c7c7c"></div>
<div style="left:754px;top:414px;width:1px;height:1px;background:#7c7c7c"></div>
<div style="left:758px;top:414px;width:1px;height:1px;background:#7c7c7c"></div>
<div style="left:762px;top:414px;width:1px;height:1px;background:#7c7c7c"></div>
<div style="left:766px;top:414px;width:1px;height:1px;background:#7c7c7c"></div>
<div style="left:770px;top:414px;width:1px;height:1px;background:#7c7c7c"></div>
<div style="left:774px;top:414px;width:1px;height:1px;background:#7c7c7c"></div>
<div style="left:778px;top:414px;width:1px;height:1px;background:#7c7c7c"></div>
<div style="left:782px;top:414px;width:1px;height:1px;background:#7c7c7c"></div>
<div style="left:786px;top:414px;width:1px;height:1px;background:#7c7c7c"></div>
<div style="left:790px;top:414px;width:1px;height:1px;background:#7c7c7c"></div>
<div style="left:794px;top:414px;width:1px;height:1px;background:#7c7c7c"></div>
<div style="left:798px;top:414px;width:1px;height:1px;background:#7c7c7c"></div>
<div style="left:802px;top:414px;width:1px;height:1px;background:#7c7c7c"></div>
<div style="left:806px;top:414px;width:1px;height:1px;background:#7c7c7c"></div>
<div style="left:810px;top:414px;width:1px;height:1px;background:#7c7c7c"></div>
<div style="left:814px;top:414px;width:1px;height:1px;background:#7c7c7c"></div>
<div style="left:818px;top:414px;width:1px;height:1px;background:#7c7c7c"></div>
<div style="left:822px;top:414px;width:1px;height:1px;background:#7c7c7c"></div>
<div style="left:826px;top:414px;width:1px;height:1px;background:#7c7c7c"></div>
<div style="left:830px;top:414px;width:1px;height:1px;background:#7c7c7c"></div>
<div style="left:834px;top:414px;width:1px;height:1px;background:#7c7c7c"></div>
<div style="left:838px;top:414px;width:1px;height:1px;background:#7c7c7c"></div>
<div style="left:842px;top:414px;width:1px;height:1px;background:#7c7c7c"></div>
<div style="left:846px;top:414px;width:1px;height:1px;background:#7c7c7c"></div>
<div style="left:850px;top:414px;width:1px;height:1px;background:#7c7c7c"></div>
<div style="left:854px;top:414px;width:1px;height:1px;background:#7c7c7c"></div>
<div style="left:858px;top:414px;width:1px;height:1px;background:#7c7c7c"></div>
<div style="left:862px;top:414px;width:1px;height:1px;background:#7c7c7c"></div>
<div style="left:866px;top:414px;width:1px;height:1px;background:#7c7c7c"></div>
<div style="left:870px;top:414px;width:1px;height:1px;background:#7c7c7c"></div>
<div style="left:874px;top:414px;width:1px;height:1px;background:#7c7c7c"></div>
<div style="left:878px;top:414px;width:1px;height:1px;background:#7c7c7c"></div>
<div style="left:882px;top:414px;width:1px;height:1px;background:#7c7c7c"></div>
<div style="left:886px;top:414px;width:1px;height:1px;background:#7c7c7c"></div>
<div style="left:890px;top:414px;width:1px;height:1px;background:#7c7c7c"></div>
<div style="left:894px;top:414px;width:1px;height:1px;background:#7c7c7c"></div>
<div style="left:898px;top:414px;width:1px;height:1px;background:#7c7c7c"></div>
<div style="left:902px;top:414px;width:1px;height:1px;background:#7c7c7c"></div>
<div style="left:906px;top:414px;width:1px;height:1px;background:#7c7c7c"></div>
<div style="left:910px;top:414px;width:1px;height:1px;background:#7c7c7c"></div>
<div style="left:914px;top:414px;width:1px;height:1px;background:#7c7c7c"></div>
<div style="left:918px;top:414px;width:1px;height:1px;background:#7c7c7c"></div>
<div style="left:922px;top:414px;width:1px;height:1px;background:#7c7c7c"></div>
<div style="left:926px;top:414px;width:1px;height:1px;background:#7c7c7c"></div>
<div style="left:930px;top:414px;width:1px;height:1px;background:#7c7c7c"></div>
<div style="left:934px;top:414px;width:1px;height:1px;background:#7c7c7c"></div>
<div style="left:938px;top:414px;width:1px;height:1px;background:#7c7c7c"></div>
<div style="left:942px;top:414px;width:1px;height:1px;background:#7c7c7c"></div>
<div style="left:946px;top:414px;width:1px;height:1px;background:#7c7c7c"></div>
<div style="left:950px;top:414px;width:1px;height:1px;background:#7c7c7c"></div>
<div style="left:954px;top:414px;width:1px;height:1px;background:#7c7c7c"></div>
<div style="left:958px;top:414px;width:1px;height:1px;background:#7c7c7c"></div>
<div style="left:962px;top:414px;width:1px;height:1px;background:#7c7c7c"></div>
<div style="left:966px;top:414px;width:1px;height:1px;background:#7c7c7c"></div>
<div style="left:970px;top:414px;width:1px;height:1px;background:#7c7c7c"></div>
<div style="left:974px;top:414px;width:1px;height:1px;background:#7c7c7c"></div>
<div style="left:978px;top:414px;width:1px;height:1px;background:#7c7c7c"></div>
<div style="left:676px;top:416px;width:1px;height:1px;background:#7c7c7c"></div>
<div style="left:680px;top:416px;width:1px;height:1px;background:#7c7c7c"></div>
<div style="left:684px;top:416px;width:1px;height:1px;background:#7c7c7c"></div>
<div style="left:688px;top:416px;width:1px;height:1px;background:#7c7c7c"></div>
<div style="left:692px;top:416px;width:1px;height:1px;background:#7c7c7c"></div>
<div style="left:696px;top:416px;width:1px;height:1px;background:#7c7c7c"></div>
<div style="left:700px;top:416px;width:1px;height:1px;background:#7c7c7c"></div>
<div style="left:704px;top:416px;width:1px;height:1px;background:#7c7c7c"></div>
<div style="left:708px;top:416px;width:1px;height:1px;background:#7c7c7c"></div>
<div style="left:712px;top:416px;width:1px;height:1px;background:#7c7c7c"></div>
<div style="left:716px;top:416px;width:1px;height:1px;background:#7c7c7c"></div>
<div style="left:720px;top:416px;width:1px;height:1px;background:#7c7c7c"></div>
<div style="left:724px;top:416px;width:1px;height:1px;background:#7c7c7c"></div>
<div style="left:728px;top:416px;width:1px;height:1px;background:#7c7c7c"></div>
<div style="left:732px;top:416px;width:1px;height:1px;background:#7c7c7c"></div>
<div style="left:736px;top:416px;width:1px;height:1px;background:#7c7c7c"></div>
<div style="left:740px;top:416px;width:1px;height:1px;background:#7c7c7c"></div>
<div style="left:744px;top:416px;width:1px;height:1px;background:#7c7c7c"></div>
<div style="left:748px;top:416px;width:1px;height:1px;background:#7c7c7c"></div>
<div style="left:752px;top:416px;width:1px;height:1px;background:#7c7c7c"></div>
<div style="left:756px;top:416px;width:1px;height:1px;background:#7c7c7c"></div>
<div style="left:760px;top:416px;width:1px;height:1px;background:#7c7c7c"></div>
<div style="left:764px;top:416px;width:1px;height:1px;background:#7c7c7c"></div>
<div style="left:768px;top:416px;width:1px;height:1px;background:#7c7c7c"></div>
<div style="left:772px;top:416px;width:1px;height:1px;background:#7c7c7c"></div>
<div style="left:776px;top:416px;width:1px;height:1px;background:#7c7c7c"></div>
<div style="left:780px;top:416px;width:1px;height:1px;background:#7c7c7c"></div>
<div style="left:784px;top:416px;width:1px;height:1px;background:#7c7c7c"></div>
<div style="left:788px;top:416px;width:1px;height:1px;background:#7c7c7c"></div>
<div style="left:792px;top:416px;width:1px;height:1px;background:#7c7c7c"></div>
<div style="left:796px;top:416px;width:1px;height:1px;background:#7c7c7c"></div>
<div style="left:800px;top:416px;width:1px;height:1px;background:#7c7c7c"></div>
<div style="left:804px;top:416px;width:1px;height:1px;background:#7c7c7c"></div>
<div style="left:808px;top:416px;width:1px;height:1px;background:#7c7c7c"></div>
<div style="left:812px;top:416px;width:1px;height:1px;background:#7c7c7c"></div>
<div style="left:816px;top:416px;width:1px;height:1px;background:#7c7c7c"></div>
<div style="left:820px;top:416px;width:1px;height:1px;background:#7c7c7c"></div>
<div style="left:824px;top:416px;width:1px;height:1px;background:#7c7c7c"></div>
<div style="left:828px;top:416px;width:1px;height:1px;background:#7c7c7c"></div>
<div style="left:832px;top:416px;width:1px;height:1px;background:#7c7c7c"></div>
<div style="left:836px;top:416px;width:1px;height:1px;background:#7c7c7c"></div>
<div style="left:840px;top:416px;width:1px;height:1px;background:#7c7c7c"></div>
<div style="left:844px;top:416px;width:1px;height:1px;background:#7c7c7c"></div>
<div style="left:848px;top:416px;width:1px;height:1px;background:#7c7c7c"></div>
<div style="left:852px;top:416px;width:1px;height:1px;background:#7c7c7c"></div>
<div style="left:856px;top:416px;width:1px;height:1px;background:#7c7c7c"></div>
<div style="left:860px;top:416px;width:1px;height:1px;background:#7c7c7c"></div>
<div style="left:864px;top:416px;width:1px;height:1px;background:#7c7c7c"></div>
<div style="left:868px;top:416px;width:1px;height:1px;background:#7c7c7c"></div>
<div style="left:872px;top:416px;width:1px;height:1px;background:#7c7c7c"></div>
<div style="left:876px;top:416px;width:1px;height:1px;background:#7c7c7c"></div>
<div style="left:880px;top:416px;width:1px;height:1px;background:#7c7c7c"></div>
<div style="left:884px;top:416px;width:1px;height:1px;background:#7c7c7c"></div>
<div style="left:888px;top:416px;width:1px;height:1px;background:#7c7c7c"></div>
<div style="left:892px;top:416px;width:1px;height:1px;background:#7c7c7c"></div>
<div style="left:896px;top:416px;width:1px;height:1px;background:#7c7c7c"></div>
<div style="left:900px;top:416px;width:1px;height:1px;background:#7c7c7c"></div>
<div style="left:904px;top:416px;width:1px;height:1px;background:#7c7c7c"></div>
<div style="left:908px;top:416px;width:1px;height:1px;background:#7c7c7c"></div>
<div style="left:912px;top:416px;width:1px;height:1px;background:#7c7c7c"></div>
<div style="left:916px;top:416px;width:1px;height:1px;background:#7c7c7c"></div>
<div style="left:920px;top:416px;width:1px;height:1px;background:#7c7c7c"></div>
<div style="left:924px;top:416px;width:1px;height:1px;background:#7c7c7c"></div>
<div style="left:928px;top:416px;width:1px;height:1px;background:#7c7c7c"></div>
<div style="left:932px;top:416px;width:1px;height:1px;background:#7c7c7c"></div>
<div style="left:936px;top:416px;width:1px;height:1px;background:#7c7c7c"></div>
<div style="left:940px;top:416px;width:1px;height:1px;background:#7c7c7c"></div>
<div style="left:944px;top:416px;width:1px;height:1px;background:#7c7c7c"></div>
<div style="left:948px;top:416px;width:1px;height:1px;background:#7c7c7c"></div>
<div style="left:952px;top:416px;width:1px;height:1px;background:#7c7c7c"></div>
<div style="left:956px;top:416px;width:1px;height:1px;background:#7c7c7c"></div>
<div style="left:960px;top:416px;width:1px;height:1px;background:#7c7c7c"></div>
<div style="left:964px;top:416px;width:1px;height:1px;background:#7c7c7c"></div>
<div style="left:968px;top:416px;width:1px;height:1px;background:#7c7c7c"></div>
<div style="left:972px;top:416px;width:1px;height:1px;background:#7c7c7c"></div>
<div style="left:976px;top:416px;width:1px;height:1px;background:#7c7c7c"></div>
<svg style="left:666px;top:412px" width="20" height="5" viewBox="0 0 20 5"><path d="M0 4.5 L4 0.5 L8 4.5 Z" fill="#5b7fc1"/><path d="M0.3 4.3 L4 0.6" stroke="#1a1a1a" stroke-width="1.1"/><path d="M12 0 L20 0 L16 4.5 Z" fill="#5b7fc1"/><path d="M12 0.5 L20 0.5" stroke="#1a1a1a" stroke-width="1"/></svg>
<div style="left:663px;top:419px;width:317px;height:1px;background:#8d9aa8"></div>
<div style="left:665px;top:428px;width:311px;height:125px;box-sizing:border-box;border:2px solid #9a9a9a"></div>
<div style="left:667px;top:430px;width:307px;height:121px;box-sizing:border-box;border-left:1px solid #fbfbfb;border-top:1px solid #fbfbfb"></div>
<div style="left:669.0px;top:426px;width:72.6px;height:6px;background:#ededed"></div>
<div class="t" style="left:670.72px;top:420.00px;font-size:12px;font-weight:bold;color:#1c1c28;transform:scaleX(0.9609);">DRC Control</div>
<div class="t" style="left:705.64px;top:122.00px;font-size:12px;font-weight:bold;color:#1c1c28;transform:scaleX(0.9518);">Component Pins</div>
<div style="left:796px;top:121px;width:115px;height:20px;box-sizing:border-box;border:1px solid #7d91a6;background:#fff"></div>
<div style="left:797px;top:122px;width:93px;height:18px;box-sizing:border-box;border:1px solid #c9d8e7;background:#fff"></div>
<div style="left:891px;top:121px;width:20px;height:20px;box-sizing:border-box;border:1px solid #7d91a6;background:#fff"></div>
<svg style="left:896px;top:129px" width="10" height="6"><path d="M0 0 L10 0 L5 5 Z" fill="#262626"/></svg>
<div class="t" style="left:797.68px;top:122.00px;font-size:12px;font-weight:bold;color:#111;transform:scaleX(1.0104);">None</div>
<div class="t" style="left:773.92px;top:142.00px;font-size:12px;font-weight:bold;color:#1c1c28;transform:scaleX(0.9171);">Vias</div>
<div style="left:796px;top:141px;width:115px;height:20px;box-sizing:border-box;border:1px solid #7d91a6;background:#fff"></div>
<div style="left:797px;top:142px;width:93px;height:18px;box-sizing:border-box;border:1px solid #c9d8e7;background:#fff"></div>
<div style="left:891px;top:141px;width:20px;height:20px;box-sizing:border-box;border:1px solid #7d91a6;background:#fff"></div>
<svg style="left:896px;top:149px" width="10" height="6"><path d="M0 0 L10 0 L5 5 Z" fill="#262626"/></svg>
<div class="t" style="left:797.68px;top:142.00px;font-size:12px;font-weight:bold;color:#111;transform:scaleX(1.0104);">None</div>
<div class="t" style="left:713.15px;top:162.00px;font-size:12px;font-weight:bold;color:#1c1c28;transform:scaleX(0.9351);">Connector Pins</div>
<div style="left:796px;top:161px;width:115px;height:20px;box-sizing:border-box;border:1px solid #7d91a6;background:#fff"></div>
<div style="left:797px;top:162px;width:93px;height:18px;box-sizing:border-box;border:1px solid #c9d8e7;background:#fff"></div>
<div style="left:891px;top:161px;width:20px;height:20px;box-sizing:border-box;border:1px solid #7d91a6;background:#fff"></div>
<svg style="left:896px;top:169px" width="10" height="6"><path d="M0 0 L10 0 L5 5 Z" fill="#262626"/></svg>
<div class="t" style="left:797.68px;top:162.00px;font-size:12px;font-weight:bold;color:#111;transform:scaleX(1.0104);">None</div>
<div class="t" style="left:710.83px;top:182.00px;font-size:12px;font-weight:bold;color:#a3a3a3;transform:scaleX(0.9565);">Back Drill Stub</div>
<div style="left:796px;top:181px;width:93px;height:20px;box-sizing:border-box;border:1px solid #b3c6da;background:#fff"></div>
<div class="t" style="left:797.82px;top:182.00px;font-size:12px;font-weight:normal;color:#a7b8ca;transform:scaleX(0.8640);">10.0</div>
<div class="t" style="left:889.20px;top:182.00px;font-size:12px;font-weight:bold;color:#a3a3a3;transform:scaleX(0.9015);">mils</div>
<div class="t" style="left:711.53px;top:202.00px;font-size:12px;font-weight:bold;color:#a3a3a3;transform:scaleX(0.9556);">Per Layer Stub</div>
<div style="left:800px;top:203px;width:16px;height:16px;background:#cdcdcd;border:1px solid #d6d6d6;box-sizing:border-box"></div>
<div class="t" style="left:711.53px;top:222.00px;font-size:12px;font-weight:bold;color:#1c1c28;transform:scaleX(0.9550);">Press Fit Depth</div>
<div style="left:796px;top:221px;width:86px;height:19px;box-sizing:border-box;border:1px solid #7d91a6;background:#fff"></div>
<div class="t" style="left:798.15px;top:222.00px;font-size:12px;font-weight:normal;color:#101018;transform:scaleX(0.9460);">50.0</div>
<div class="t" style="left:882.87px;top:222.00px;font-size:12px;font-weight:bold;color:#1c1c28;transform:scaleX(0.9411);">mils</div>
<div class="t" style="left:671.29px;top:330.00px;font-size:12px;font-weight:bold;color:#1c1c28;transform:scaleX(0.9956);">Max Differential Clearance</div>
<div style="left:824px;top:331px;width:122px;height:16px;box-sizing:border-box;border:1px solid #7d91a6;background:#fff"></div>
<div class="t" style="left:825.80px;top:330.00px;font-size:12px;font-weight:normal;color:#101018;transform:scaleX(0.8868);">12.0</div>
<div class="t" style="left:946.25px;top:330.00px;font-size:12px;font-weight:bold;color:#1c1c28;transform:scaleX(0.9587);">mils</div>
<div class="t" style="left:761.67px;top:346.00px;font-size:12px;font-weight:bold;color:#1c1c28;transform:scaleX(1.0216);">Max Skew</div>
<div style="left:824px;top:347px;width:122px;height:15px;box-sizing:border-box;border:1px solid #7d91a6;background:#fff"></div>
<div class="t" style="left:826.15px;top:346.00px;font-size:12px;font-weight:normal;color:#101018;transform:scaleX(0.9460);">50.0</div>
<div class="t" style="left:946.25px;top:346.00px;font-size:12px;font-weight:bold;color:#1c1c28;transform:scaleX(0.9587);">mils</div>
<div class="t" style="left:756.20px;top:362.00px;font-size:12px;font-weight:bold;color:#1c1c28;transform:scaleX(0.9923);">Max Extend</div>
<div style="left:825px;top:363px;width:121px;height:15px;box-sizing:border-box;border:1px solid #7d91a6;background:#fff"></div>
<div class="t" style="left:826.77px;top:362.00px;font-size:12px;font-weight:normal;color:#101018;transform:scaleX(0.9240);">100.0</div>
<div class="t" style="left:946.25px;top:362.00px;font-size:12px;font-weight:bold;color:#1c1c28;transform:scaleX(0.9587);">mils</div>
<div class="t" style="left:670.74px;top:460.00px;font-size:12px;font-weight:bold;color:#1c1c28;transform:scaleX(0.9435);">Etch Over Plane Edge Clearance</div>
<div style="left:849px;top:459px;width:96px;height:19px;box-sizing:border-box;border:1px solid #7d91a6;background:#fff"></div>
<div class="t" style="left:851.12px;top:460.00px;font-size:12px;font-weight:normal;color:#101018;transform:scaleX(0.9905);">5.0</div>
<div class="t" style="left:945.25px;top:460.00px;font-size:12px;font-weight:bold;color:#1c1c28;transform:scaleX(0.9587);">mils</div>
<div style="left:3px;top:555px;width:980px;height:2px;background:#fff"></div>
<div style="left:3px;top:557px;width:980px;height:2px;background:#d3e3f5"></div>
<div style="left:2px;top:560px;width:982px;height:9px;background:#f4f4f4"></div>
<div style="left:2px;top:560px;width:982px;height:1px;background:#ffffff"></div>
<div style="left:13px;top:564px;width:1px;height:1px;background:#7c7c7c"></div>
<div style="left:17px;top:564px;width:1px;height:1px;background:#7c7c7c"></div>
<div style="left:21px;top:564px;width:1px;height:1px;background:#7c7c7c"></div>
<div style="left:25px;top:564px;width:1px;height:1px;background:#7c7c7c"></div>
<div style="left:29px;top:564px;width:1px;height:1px;background:#7c7c7c"></div>
<div style="left:33px;top:564px;width:1px;height:1px;background:#7c7c7c"></div>
<div style="left:37px;top:564px;width:1px;height:1px;background:#7c7c7c"></div>
<div style="left:41px;top:564px;width:1px;height:1px;background:#7c7c7c"></div>
<div style="left:45px;top:564px;width:1px;height:1px;background:#7c7c7c"></div>
<div style="left:49px;top:564px;width:1px;height:1px;background:#7c7c7c"></div>
<div style="left:53px;top:564px;width:1px;height:1px;background:#7c7c7c"></div>
<div style="left:57px;top:564px;width:1px;height:1px;background:#7c7c7c"></div>
<div style="left:61px;top:564px;width:1px;height:1px;background:#7c7c7c"></div>
<div style="left:65px;top:564px;width:1px;height:1px;background:#7c7c7c"></div>
<div style="left:69px;top:564px;width:1px;height:1px;background:#7c7c7c"></div>
<div style="left:73px;top:564px;width:1px;height:1px;background:#7c7c7c"></div>
<div style="left:77px;top:564px;width:1px;height:1px;background:#7c7c7c"></div>
<div style="left:81px;top:564px;width:1px;height:1px;background:#7c7c7c"></div>
<div style="left:85px;top:564px;width:1px;height:1px;background:#7c7c7c"></div>
<div style="left:89px;top:564px;width:1px;height:1px;background:#7c7c7c"></div>
<div style="left:93px;top:564px;width:1px;height:1px;background:#7c7c7c"></div>
<div style="left:97px;top:564px;width:1px;height:1px;background:#7c7c7c"></div>
<div style="left:101px;top:564px;width:1px;height:1px;background:#7c7c7c"></div>
<div style="left:105px;top:564px;width:1px;height:1px;background:#7c7c7c"></div>
<div style="left:109px;top:564px;width:1px;height:1px;background:#7c7c7c"></div>
<div style="left:113px;top:564px;width:1px;height:1px;background:#7c7c7c"></div>
<div style="left:117px;top:564px;width:1px;height:1px;background:#7c7c7c"></div>
<div style="left:121px;top:564px;width:1px;height:1px;background:#7c7c7c"></div>
<div style="left:125px;top:564px;width:1px;height:1px;background:#7c7c7c"></div>
<div style="left:129px;top:564px;width:1px;height:1px;background:#7c7c7c"></div>
<div style="left:133px;top:564px;width:1px;height:1px;background:#7c7c7c"></div>
<div style="left:137px;top:564px;width:1px;height:1px;background:#7c7c7c"></div>
<div style="left:141px;top:564px;width:1px;height:1px;background:#7c7c7c"></div>
<div style="left:145px;top:564px;width:1px;height:1px;background:#7c7c7c"></div>
<div style="left:149px;top:564px;width:1px;height:1px;background:#7c7c7c"></div>
<div style="left:153px;top:564px;width:1px;height:1px;background:#7c7c7c"></div>
<div style="left:157px;top:564px;width:1px;height:1px;background:#7c7c7c"></div>
<div style="left:161px;top:564px;width:1px;height:1px;background:#7c7c7c"></div>
<div style="left:165px;top:564px;width:1px;height:1px;background:#7c7c7c"></div>
<div style="left:169px;top:564px;width:1px;height:1px;background:#7c7c7c"></div>
<div style="left:173px;top:564px;width:1px;height:1px;background:#7c7c7c"></div>
<div style="left:177px;top:564px;width:1px;height:1px;background:#7c7c7c"></div>
<div style="left:181px;top:564px;width:1px;height:1px;background:#7c7c7c"></div>
<div style="left:185px;top:564px;width:1px;height:1px;background:#7c7c7c"></div>
<div style="left:189px;top:564px;width:1px;height:1px;background:#7c7c7c"></div>
<div style="left:193px;top:564px;width:1px;height:1px;background:#7c7c7c"></div>
<div style="left:197px;top:564px;width:1px;height:1px;background:#7c7c7c"></div>
<div style="left:201px;top:564px;width:1px;height:1px;background:#7c7c7c"></div>
<div style="left:205px;top:564px;width:1px;height:1px;background:#7c7c7c"></div>
<div style="left:209px;top:564px;width:1px;height:1px;background:#7c7c7c"></div>
<div style="left:213px;top:564px;width:1px;height:1px;background:#7c7c7c"></div>
<div style="left:217px;top:564px;width:1px;height:1px;background:#7c7c7c"></div>
<div style="left:221px;top:564px;width:1px;height:1px;background:#7c7c7c"></div>
<div style="left:225px;top:564px;width:1px;height:1px;background:#7c7c7c"></div>
<div style="left:229px;top:564px;width:1px;height:1px;background:#7c7c7c"></div>
<div style="left:233px;top:564px;width:1px;height:1px;background:#7c7c7c"></div>
<div style="left:237px;top:564px;width:1px;height:1px;background:#7c7c7c"></div>
<div style="left:241px;top:564px;width:1px;height:1px;background:#7c7c7c"></div>
<div style="left:245px;top:564px;width:1px;height:1px;background:#7c7c7c"></div>
<div style="left:249px;top:564px;width:1px;height:1px;background:#7c7c7c"></div>
<div style="left:253px;top:564px;width:1px;height:1px;background:#7c7c7c"></div>
<div style="left:257px;top:564px;width:1px;height:1px;background:#7c7c7c"></div>
<div style="left:261px;top:564px;width:1px;height:1px;background:#7c7c7c"></div>
<div style="left:265px;top:564px;width:1px;height:1px;background:#7c7c7c"></div>
<div style="left:269px;top:564px;width:1px;height:1px;background:#7c7c7c"></div>
<div style="left:273px;top:564px;width:1px;height:1px;background:#7c7c7c"></div>
<div style="left:277px;top:564px;width:1px;height:1px;background:#7c7c7c"></div>
<div style="left:281px;top:564px;width:1px;height:1px;background:#7c7c7c"></div>
<div style="left:285px;top:564px;width:1px;height:1px;background:#7c7c7c"></div>
<div style="left:289px;top:564px;width:1px;height:1px;background:#7c7c7c"></div>
<div style="left:293px;top:564px;width:1px;height:1px;background:#7c7c7c"></div>
<div style="left:297px;top:564px;width:1px;height:1px;background:#7c7c7c"></div>
<div style="left:301px;top:564px;width:1px;height:1px;background:#7c7c7c"></div>
<div style="left:305px;top:564px;width:1px;height:1px;background:#7c7c7c"></div>
<div style="left:309px;top:564px;width:1px;height:1px;background:#7c7c7c"></div>
<div style="left:313px;top:564px;width:1px;height:1px;background:#7c7c7c"></div>
<div style="left:317px;top:564px;width:1px;height:1px;background:#7c7c7c"></div>
<div style="left:321px;top:564px;width:1px;height:1px;background:#7c7c7c"></div>
<div style="left:325px;top:564px;width:1px;height:1px;background:#7c7c7c"></div>
<div style="left:329px;top:564px;width:1px;height:1px;background:#7c7c7c"></div>
<div style="left:333px;top:564px;width:1px;height:1px;background:#7c7c7c"></div>
<div style="left:337px;top:564px;width:1px;height:1px;background:#7c7c7c"></div>
<div style="left:341px;top:564px;width:1px;height:1px;background:#7c7c7c"></div>
<div style="left:345px;top:564px;width:1px;height:1px;background:#7c7c7c"></div>
<div style="left:349px;top:564px;width:1px;height:1px;background:#7c7c7c"></div>
<div style="left:353px;top:564px;width:1px;height:1px;background:#7c7c7c"></div>
<div style="left:357px;top:564px;width:1px;height:1px;background:#7c7c7c"></div>
<div style="left:361px;top:564px;width:1px;height:1px;background:#7c7c7c"></div>
<div style="left:365px;top:564px;width:1px;height:1px;background:#7c7c7c"></div>
<div style="left:369px;top:564px;width:1px;height:1px;background:#7c7c7c"></div>
<div style="left:373px;top:564px;width:1px;height:1px;background:#7c7c7c"></div>
<div style="left:377px;top:564px;width:1px;height:1px;background:#7c7c7c"></div>
<div style="left:381px;top:564px;width:1px;height:1px;background:#7c7c7c"></div>
<div style="left:385px;top:564px;width:1px;height:1px;background:#7c7c7c"></div>
<div style="left:389px;top:564px;width:1px;height:1px;background:#7c7c7c"></div>
<div style="left:393px;top:564px;width:1px;height:1px;background:#7c7c7c"></div>
<div style="left:397px;top:564px;width:1px;height:1px;background:#7c7c7c"></div>
<div style="left:401px;top:564px;width:1px;height:1px;background:#7c7c7c"></div>
<div style="left:405px;top:564px;width:1px;height:1px;background:#7c7c7c"></div>
<div style="left:409px;top:564px;width:1px;height:1px;background:#7c7c7c"></div>
<div style="left:413px;top:564px;width:1px;height:1px;background:#7c7c7c"></div>
<div style="left:417px;top:564px;width:1px;height:1px;background:#7c7c7c"></div>
<div style="left:421px;top:564px;width:1px;height:1px;background:#7c7c7c"></div>
<div style="left:425px;top:564px;width:1px;height:1px;background:#7c7c7c"></div>
<div style="left:429px;top:564px;width:1px;height:1px;background:#7c7c7c"></div>
<div style="left:433px;top:564px;width:1px;height:1px;background:#7c7c7c"></div>
<div style="left:437px;top:564px;width:1px;height:1px;background:#7c7c7c"></div>
<div style="left:441px;top:564px;width:1px;height:1px;background:#7c7c7c"></div>
<div style="left:445px;top:564px;width:1px;height:1px;background:#7c7c7c"></div>
<div style="left:449px;top:564px;width:1px;height:1px;background:#7c7c7c"></div>
<div style="left:453px;top:564px;width:1px;height:1px;background:#7c7c7c"></div>
<div style="left:457px;top:564px;width:1px;height:1px;background:#7c7c7c"></div>
<div style="left:461px;top:564px;width:1px;height:1px;background:#7c7c7c"></div>
<div style="left:465px;top:564px;width:1px;height:1px;background:#7c7c7c"></div>
<div style="left:469px;top:564px;width:1px;height:1px;background:#7c7c7c"></div>
<div style="left:473px;top:564px;width:1px;height:1px;background:#7c7c7c"></div>
<div style="left:477px;top:564px;width:1px;height:1px;background:#7c7c7c"></div>
<div style="left:481px;top:564px;width:1px;height:1px;background:#7c7c7c"></div>
<div style="left:485px;top:564px;width:1px;height:1px;background:#7c7c7c"></div>
<div style="left:489px;top:564px;width:1px;height:1px;background:#7c7c7c"></div>
<div style="left:493px;top:564px;width:1px;height:1px;background:#7c7c7c"></div>
<div style="left:497px;top:564px;width:1px;height:1px;background:#7c7c7c"></div>
<div style="left:501px;top:564px;width:1px;height:1px;background:#7c7c7c"></div>
<div style="left:505px;top:564px;width:1px;height:1px;background:#7c7c7c"></div>
<div style="left:509px;top:564px;width:1px;height:1px;background:#7c7c7c"></div>
<div style="left:513px;top:564px;width:1px;height:1px;background:#7c7c7c"></div>
<div style="left:517px;top:564px;width:1px;height:1px;background:#7c7c7c"></div>
<div style="left:521px;top:564px;width:1px;height:1px;background:#7c7c7c"></div>
<div style="left:525px;top:564px;width:1px;height:1px;background:#7c7c7c"></div>
<div style="left:529px;top:564px;width:1px;height:1px;background:#7c7c7c"></div>
<div style="left:533px;top:564px;width:1px;height:1px;background:#7c7c7c"></div>
<div style="left:537px;top:564px;width:1px;height:1px;background:#7c7c7c"></div>
<div style="left:541px;top:564px;width:1px;height:1px;background:#7c7c7c"></div>
<div style="left:545px;top:564px;width:1px;height:1px;background:#7c7c7c"></div>
<div style="left:549px;top:564px;width:1px;height:1px;background:#7c7c7c"></div>
<div style="left:553px;top:564px;width:1px;height:1px;background:#7c7c7c"></div>
<div style="left:557px;top:564px;width:1px;height:1px;background:#7c7c7c"></div>
<div style="left:561px;top:564px;width:1px;height:1px;background:#7c7c7c"></div>
<div style="left:565px;top:564px;width:1px;height:1px;background:#7c7c7c"></div>
<div style="left:569px;top:564px;width:1px;height:1px;background:#7c7c7c"></div>
<div style="left:573px;top:564px;width:1px;height:1px;background:#7c7c7c"></div>
<div style="left:577px;top:564px;width:1px;height:1px;background:#7c7c7c"></div>
<div style="left:581px;top:564px;width:1px;height:1px;background:#7c7c7c"></div>
<div style="left:585px;top:564px;width:1px;height:1px;background:#7c7c7c"></div>
<div style="left:589px;top:564px;width:1px;height:1px;background:#7c7c7c"></div>
<div style="left:593px;top:564px;width:1px;height:1px;background:#7c7c7c"></div>
<div style="left:597px;top:564px;width:1px;height:1px;background:#7c7c7c"></div>
<div style="left:601px;top:564px;width:1px;height:1px;background:#7c7c7c"></div>
<div style="left:605px;top:564px;width:1px;height:1px;background:#7c7c7c"></div>
<div style="left:609px;top:564px;width:1px;height:1px;background:#7c7c7c"></div>
<div style="left:613px;top:564px;width:1px;height:1px;background:#7c7c7c"></div>
<div style="left:617px;top:564px;width:1px;height:1px;background:#7c7c7c"></div>
<div style="left:621px;top:564px;width:1px;height:1px;background:#7c7c7c"></div>
<div style="left:625px;top:564px;width:1px;height:1px;background:#7c7c7c"></div>
<div style="left:629px;top:564px;width:1px;height:1px;background:#7c7c7c"></div>
<div style="left:633px;top:564px;width:1px;height:1px;background:#7c7c7c"></div>
<div style="left:637px;top:564px;width:1px;height:1px;background:#7c7c7c"></div>
<div style="left:641px;top:564px;width:1px;height:1px;background:#7c7c7c"></div>
<div style="left:645px;top:564px;width:1px;height:1px;background:#7c7c7c"></div>
<div style="left:649px;top:564px;width:1px;height:1px;background:#7c7c7c"></div>
<div style="left:653px;top:564px;width:1px;height:1px;background:#7c7c7c"></div>
<div style="left:657px;top:564px;width:1px;height:1px;background:#7c7c7c"></div>
<div style="left:661px;top:564px;width:1px;height:1px;background:#7c7c7c"></div>
<div style="left:665px;top:564px;width:1px;height:1px;background:#7c7c7c"></div>
<div style="left:669px;top:564px;width:1px;height:1px;background:#7c7c7c"></div>
<div style="left:673px;top:564px;width:1px;height:1px;background:#7c7c7c"></div>
<div style="left:677px;top:564px;width:1px;height:1px;background:#7c7c7c"></div>
<div style="left:681px;top:564px;width:1px;height:1px;background:#7c7c7c"></div>
<div style="left:685px;top:564px;width:1px;height:1px;background:#7c7c7c"></div>
<div style="left:689px;top:564px;width:1px;height:1px;background:#7c7c7c"></div>
<div style="left:693px;top:564px;width:1px;height:1px;background:#7c7c7c"></div>
<div style="left:697px;top:564px;width:1px;height:1px;background:#7c7c7c"></div>
<div style="left:701px;top:564px;width:1px;height:1px;background:#7c7c7c"></div>
<div style="left:705px;top:564px;width:1px;height:1px;background:#7c7c7c"></div>
<div style="left:709px;top:564px;width:1px;height:1px;background:#7c7c7c"></div>
<div style="left:713px;top:564px;width:1px;height:1px;background:#7c7c7c"></div>
<div style="left:717px;top:564px;width:1px;height:1px;background:#7c7c7c"></div>
<div style="left:721px;top:564px;width:1px;height:1px;background:#7c7c7c"></div>
<div style="left:725px;top:564px;width:1px;height:1px;background:#7c7c7c"></div>
<div style="left:729px;top:564px;width:1px;height:1px;background:#7c7c7c"></div>
<div style="left:733px;top:564px;width:1px;height:1px;background:#7c7c7c"></div>
<div style="left:737px;top:564px;width:1px;height:1px;background:#7c7c7c"></div>
<div style="left:741px;top:564px;width:1px;height:1px;background:#7c7c7c"></div>
<div style="left:745px;top:564px;width:1px;height:1px;background:#7c7c7c"></div>
<div style="left:749px;top:564px;width:1px;height:1px;background:#7c7c7c"></div>
<div style="left:753px;top:564px;width:1px;height:1px;background:#7c7c7c"></div>
<div style="left:757px;top:564px;width:1px;height:1px;background:#7c7c7c"></div>
<div style="left:761px;top:564px;width:1px;height:1px;background:#7c7c7c"></div>
<div style="left:765px;top:564px;width:1px;height:1px;background:#7c7c7c"></div>
<div style="left:769px;top:564px;width:1px;height:1px;background:#7c7c7c"></div>
<div style="left:773px;top:564px;width:1px;height:1px;background:#7c7c7c"></div>
<div style="left:777px;top:564px;width:1px;height:1px;background:#7c7c7c"></div>
<div style="left:781px;top:564px;width:1px;height:1px;background:#7c7c7c"></div>
<div style="left:785px;top:564px;width:1px;height:1px;background:#7c7c7c"></div>
<div style="left:789px;top:564px;width:1px;height:1px;background:#7c7c7c"></div>
<div style="left:793px;top:564px;width:1px;height:1px;background:#7c7c7c"></div>
<div style="left:797px;top:564px;width:1px;height:1px;background:#7c7c7c"></div>
<div style="left:801px;top:564px;width:1px;height:1px;background:#7c7c7c"></div>
<div style="left:805px;top:564px;width:1px;height:1px;background:#7c7c7c"></div>
<div style="left:809px;top:564px;width:1px;height:1px;background:#7c7c7c"></div>
<div style="left:813px;top:564px;width:1px;height:1px;background:#7c7c7c"></div>
<div style="left:817px;top:564px;width:1px;height:1px;background:#7c7c7c"></div>
<div style="left:821px;top:564px;width:1px;height:1px;background:#7c7c7c"></div>
<div style="left:825px;top:564px;width:1px;height:1px;background:#7c7c7c"></div>
<div style="left:829px;top:564px;width:1px;height:1px;background:#7c7c7c"></div>
<div style="left:833px;top:564px;width:1px;height:1px;background:#7c7c7c"></div>
<div style="left:837px;top:564px;width:1px;height:1px;background:#7c7c7c"></div>
<div style="left:841px;top:564px;width:1px;height:1px;background:#7c7c7c"></div>
<div style="left:845px;top:564px;width:1px;height:1px;background:#7c7c7c"></div>
<div style="left:849px;top:564px;width:1px;height:1px;background:#7c7c7c"></div>
<div style="left:853px;top:564px;width:1px;height:1px;background:#7c7c7c"></div>
<div style="left:857px;top:564px;width:1px;height:1px;background:#7c7c7c"></div>
<div style="left:861px;top:564px;width:1px;height:1px;background:#7c7c7c"></div>
<div style="left:865px;top:564px;width:1px;height:1px;background:#7c7c7c"></div>
<div style="left:869px;top:564px;width:1px;height:1px;background:#7c7c7c"></div>
<div style="left:873px;top:564px;width:1px;height:1px;background:#7c7c7c"></div>
<div style="left:877px;top:564px;width:1px;height:1px;background:#7c7c7c"></div>
<div style="left:881px;top:564px;width:1px;height:1px;background:#7c7c7c"></div>
<div style="left:885px;top:564px;width:1px;height:1px;background:#7c7c7c"></div>
<div style="left:889px;top:564px;width:1px;height:1px;background:#7c7c7c"></div>
<div style="left:893px;top:564px;width:1px;height:1px;background:#7c7c7c"></div>
<div style="left:897px;top:564px;width:1px;height:1px;background:#7c7c7c"></div>
<div style="left:901px;top:564px;width:1px;height:1px;background:#7c7c7c"></div>
<div style="left:905px;top:564px;width:1px;height:1px;background:#7c7c7c"></div>
<div style="left:909px;top:564px;width:1px;height:1px;background:#7c7c7c"></div>
<div style="left:913px;top:564px;width:1px;height:1px;background:#7c7c7c"></div>
<div style="left:917px;top:564px;width:1px;height:1px;background:#7c7c7c"></div>
<div style="left:921px;top:564px;width:1px;height:1px;background:#7c7c7c"></div>
<div style="left:925px;top:564px;width:1px;height:1px;background:#7c7c7c"></div>
<div style="left:929px;top:564px;width:1px;height:1px;background:#7c7c7c"></div>
<div style="left:933px;top:564px;width:1px;height:1px;background:#7c7c7c"></div>
<div style="left:937px;top:564px;width:1px;height:1px;background:#7c7c7c"></div>
<div style="left:941px;top:564px;width:1px;height:1px;background:#7c7c7c"></div>
<div style="left:945px;top:564px;width:1px;height:1px;background:#7c7c7c"></div>
<div style="left:949px;top:564px;width:1px;height:1px;background:#7c7c7c"></div>
<div style="left:953px;top:564px;width:1px;height:1px;background:#7c7c7c"></div>
<div style="left:957px;top:564px;width:1px;height:1px;background:#7c7c7c"></div>
<div style="left:961px;top:564px;width:1px;height:1px;background:#7c7c7c"></div>
<div style="left:965px;top:564px;width:1px;height:1px;background:#7c7c7c"></div>
<div style="left:969px;top:564px;width:1px;height:1px;background:#7c7c7c"></div>
<div style="left:973px;top:564px;width:1px;height:1px;background:#7c7c7c"></div>
<div style="left:977px;top:564px;width:1px;height:1px;background:#7c7c7c"></div>
<div style="left:981px;top:564px;width:1px;height:1px;background:#7c7c7c"></div>
<div style="left:15px;top:566px;width:1px;height:1px;background:#7c7c7c"></div>
<div style="left:19px;top:566px;width:1px;height:1px;background:#7c7c7c"></div>
<div style="left:23px;top:566px;width:1px;height:1px;background:#7c7c7c"></div>
<div style="left:27px;top:566px;width:1px;height:1px;background:#7c7c7c"></div>
<div style="left:31px;top:566px;width:1px;height:1px;background:#7c7c7c"></div>
<div style="left:35px;top:566px;width:1px;height:1px;background:#7c7c7c"></div>
<div style="left:39px;top:566px;width:1px;height:1px;background:#7c7c7c"></div>
<div style="left:43px;top:566px;width:1px;height:1px;background:#7c7c7c"></div>
<div style="left:47px;top:566px;width:1px;height:1px;background:#7c7c7c"></div>
<div style="left:51px;top:566px;width:1px;height:1px;background:#7c7c7c"></div>
<div style="left:55px;top:566px;width:1px;height:1px;background:#7c7c7c"></div>
<div style="left:59px;top:566px;width:1px;height:1px;background:#7c7c7c"></div>
<div style="left:63px;top:566px;width:1px;height:1px;background:#7c7c7c"></div>
<div style="left:67px;top:566px;width:1px;height:1px;background:#7c7c7c"></div>
<div style="left:71px;top:566px;width:1px;height:1px;background:#7c7c7c"></div>
<div style="left:75px;top:566px;width:1px;height:1px;background:#7c7c7c"></div>
<div style="left:79px;top:566px;width:1px;height:1px;background:#7c7c7c"></div>
<div style="left:83px;top:566px;width:1px;height:1px;background:#7c7c7c"></div>
<div style="left:87px;top:566px;width:1px;height:1px;background:#7c7c7c"></div>
<div style="left:91px;top:566px;width:1px;height:1px;background:#7c7c7c"></div>
<div style="left:95px;top:566px;width:1px;height:1px;background:#7c7c7c"></div>
<div style="left:99px;top:566px;width:1px;height:1px;background:#7c7c7c"></div>
<div style="left:103px;top:566px;width:1px;height:1px;background:#7c7c7c"></div>
<div style="left:107px;top:566px;width:1px;height:1px;background:#7c7c7c"></div>
<div style="left:111px;top:566px;width:1px;height:1px;background:#7c7c7c"></div>
<div style="left:115px;top:566px;width:1px;height:1px;background:#7c7c7c"></div>
<div style="left:119px;top:566px;width:1px;height:1px;background:#7c7c7c"></div>
<div style="left:123px;top:566px;width:1px;height:1px;background:#7c7c7c"></div>
<div style="left:127px;top:566px;width:1px;height:1px;background:#7c7c7c"></div>
<div style="left:131px;top:566px;width:1px;height:1px;background:#7c7c7c"></div>
<div style="left:135px;top:566px;width:1px;height:1px;background:#7c7c7c"></div>
<div style="left:139px;top:566px;width:1px;height:1px;background:#7c7c7c"></div>
<div style="left:143px;top:566px;width:1px;height:1px;background:#7c7c7c"></div>
<div style="left:147px;top:566px;width:1px;height:1px;background:#7c7c7c"></div>
<div style="left:151px;top:566px;width:1px;height:1px;background:#7c7c7c"></div>
<div style="left:155px;top:566px;width:1px;height:1px;background:#7c7c7c"></div>
<div style="left:159px;top:566px;width:1px;height:1px;background:#7c7c7c"></div>
<div style="left:163px;top:566px;width:1px;height:1px;background:#7c7c7c"></div>
<div style="left:167px;top:566px;width:1px;height:1px;background:#7c7c7c"></div>
<div style="left:171px;top:566px;width:1px;height:1px;background:#7c7c7c"></div>
<div style="left:175px;top:566px;width:1px;height:1px;background:#7c7c7c"></div>
<div style="left:179px;top:566px;width:1px;height:1px;background:#7c7c7c"></div>
<div style="left:183px;top:566px;width:1px;height:1px;background:#7c7c7c"></div>
<div style="left:187px;top:566px;width:1px;height:1px;background:#7c7c7c"></div>
<div style="left:191px;top:566px;width:1px;height:1px;background:#7c7c7c"></div>
<div style="left:195px;top:566px;width:1px;height:1px;background:#7c7c7c"></div>
<div style="left:199px;top:566px;width:1px;height:1px;background:#7c7c7c"></div>
<div style="left:203px;top:566px;width:1px;height:1px;background:#7c7c7c"></div>
<div style="left:207px;top:566px;width:1px;height:1px;background:#7c7c7c"></div>
<div style="left:211px;top:566px;width:1px;height:1px;background:#7c7c7c"></div>
<div style="left:215px;top:566px;width:1px;height:1px;background:#7c7c7c"></div>
<div style="left:219px;top:566px;width:1px;height:1px;background:#7c7c7c"></div>
<div style="left:223px;top:566px;width:1px;height:1px;background:#7c7c7c"></div>
<div style="left:227px;top:566px;width:1px;height:1px;background:#7c7c7c"></div>
<div style="left:231px;top:566px;width:1px;height:1px;background:#7c7c7c"></div>
<div style="left:235px;top:566px;width:1px;height:1px;background:#7c7c7c"></div>
<div style="left:239px;top:566px;width:1px;height:1px;background:#7c7c7c"></div>
<div style="left:243px;top:566px;width:1px;height:1px;background:#7c7c7c"></div>
<div style="left:247px;top:566px;width:1px;height:1px;background:#7c7c7c"></div>
<div style="left:251px;top:566px;width:1px;height:1px;background:#7c7c7c"></div>
<div style="left:255px;top:566px;width:1px;height:1px;background:#7c7c7c"></div>
<div style="left:259px;top:566px;width:1px;height:1px;background:#7c7c7c"></div>
<div style="left:263px;top:566px;width:1px;height:1px;background:#7c7c7c"></div>
<div style="left:267px;top:566px;width:1px;height:1px;background:#7c7c7c"></div>
<div style="left:271px;top:566px;width:1px;height:1px;background:#7c7c7c"></div>
<div style="left:275px;top:566px;width:1px;height:1px;background:#7c7c7c"></div>
<div style="left:279px;top:566px;width:1px;height:1px;background:#7c7c7c"></div>
<div style="left:283px;top:566px;width:1px;height:1px;background:#7c7c7c"></div>
<div style="left:287px;top:566px;width:1px;height:1px;background:#7c7c7c"></div>
<div style="left:291px;top:566px;width:1px;height:1px;background:#7c7c7c"></div>
<div style="left:295px;top:566px;width:1px;height:1px;background:#7c7c7c"></div>
<div style="left:299px;top:566px;width:1px;height:1px;background:#7c7c7c"></div>
<div style="left:303px;top:566px;width:1px;height:1px;background:#7c7c7c"></div>
<div style="left:307px;top:566px;width:1px;height:1px;background:#7c7c7c"></div>
<div style="left:311px;top:566px;width:1px;height:1px;background:#7c7c7c"></div>
<div style="left:315px;top:566px;width:1px;height:1px;background:#7c7c7c"></div>
<div style="left:319px;top:566px;width:1px;height:1px;background:#7c7c7c"></div>
<div style="left:323px;top:566px;width:1px;height:1px;background:#7c7c7c"></div>
<div style="left:327px;top:566px;width:1px;height:1px;background:#7c7c7c"></div>
<div style="left:331px;top:566px;width:1px;height:1px;background:#7c7c7c"></div>
<div style="left:335px;top:566px;width:1px;height:1px;background:#7c7c7c"></div>
<div style="left:339px;top:566px;width:1px;height:1px;background:#7c7c7c"></div>
<div style="left:343px;top:566px;width:1px;height:1px;background:#7c7c7c"></div>
<div style="left:347px;top:566px;width:1px;height:1px;background:#7c7c7c"></div>
<div style="left:351px;top:566px;width:1px;height:1px;background:#7c7c7c"></div>
<div style="left:355px;top:566px;width:1px;height:1px;background:#7c7c7c"></div>
<div style="left:359px;top:566px;width:1px;height:1px;background:#7c7c7c"></div>
<div style="left:363px;top:566px;width:1px;height:1px;background:#7c7c7c"></div>
<div style="left:367px;top:566px;width:1px;height:1px;background:#7c7c7c"></div>
<div style="left:371px;top:566px;width:1px;height:1px;background:#7c7c7c"></div>
<div style="left:375px;top:566px;width:1px;height:1px;background:#7c7c7c"></div>
<div style="left:379px;top:566px;width:1px;height:1px;background:#7c7c7c"></div>
<div style="left:383px;top:566px;width:1px;height:1px;background:#7c7c7c"></div>
<div style="left:387px;top:566px;width:1px;height:1px;background:#7c7c7c"></div>
<div style="left:391px;top:566px;width:1px;height:1px;background:#7c7c7c"></div>
<div style="left:395px;top:566px;width:1px;height:1px;background:#7c7c7c"></div>
<div style="left:399px;top:566px;width:1px;height:1px;background:#7c7c7c"></div>
<div style="left:403px;top:566px;width:1px;height:1px;background:#7c7c7c"></div>
<div style="left:407px;top:566px;width:1px;height:1px;background:#7c7c7c"></div>
<div style="left:411px;top:566px;width:1px;height:1px;background:#7c7c7c"></div>
<div style="left:415px;top:566px;width:1px;height:1px;background:#7c7c7c"></div>
<div style="left:419px;top:566px;width:1px;height:1px;background:#7c7c7c"></div>
<div style="left:423px;top:566px;width:1px;height:1px;background:#7c7c7c"></div>
<div style="left:427px;top:566px;width:1px;height:1px;background:#7c7c7c"></div>
<div style="left:431px;top:566px;width:1px;height:1px;background:#7c7c7c"></div>
<div style="left:435px;top:566px;width:1px;height:1px;background:#7c7c7c"></div>
<div style="left:439px;top:566px;width:1px;height:1px;background:#7c7c7c"></div>
<div style="left:443px;top:566px;width:1px;height:1px;background:#7c7c7c"></div>
<div style="left:447px;top:566px;width:1px;height:1px;background:#7c7c7c"></div>
<div style="left:451px;top:566px;width:1px;height:1px;background:#7c7c7c"></div>
<div style="left:455px;top:566px;width:1px;height:1px;background:#7c7c7c"></div>
<div style="left:459px;top:566px;width:1px;height:1px;background:#7c7c7c"></div>
<div style="left:463px;top:566px;width:1px;height:1px;background:#7c7c7c"></div>
<div style="left:467px;top:566px;width:1px;height:1px;background:#7c7c7c"></div>
<div style="left:471px;top:566px;width:1px;height:1px;background:#7c7c7c"></div>
<div style="left:475px;top:566px;width:1px;height:1px;background:#7c7c7c"></div>
<div style="left:479px;top:566px;width:1px;height:1px;background:#7c7c7c"></div>
<div style="left:483px;top:566px;width:1px;height:1px;background:#7c7c7c"></div>
<div style="left:487px;top:566px;width:1px;height:1px;background:#7c7c7c"></div>
<div style="left:491px;top:566px;width:1px;height:1px;background:#7c7c7c"></div>
<div style="left:495px;top:566px;width:1px;height:1px;background:#7c7c7c"></div>
<div style="left:499px;top:566px;width:1px;height:1px;background:#7c7c7c"></div>
<div style="left:503px;top:566px;width:1px;height:1px;background:#7c7c7c"></div>
<div style="left:507px;top:566px;width:1px;height:1px;background:#7c7c7c"></div>
<div style="left:511px;top:566px;width:1px;height:1px;background:#7c7c7c"></div>
<div style="left:515px;top:566px;width:1px;height:1px;background:#7c7c7c"></div>
<div style="left:519px;top:566px;width:1px;height:1px;background:#7c7c7c"></div>
<div style="left:523px;top:566px;width:1px;height:1px;background:#7c7c7c"></div>
<div style="left:527px;top:566px;width:1px;height:1px;background:#7c7c7c"></div>
<div style="left:531px;top:566px;width:1px;height:1px;background:#7c7c7c"></div>
<div style="left:535px;top:566px;width:1px;height:1px;background:#7c7c7c"></div>
<div style="left:539px;top:566px;width:1px;height:1px;background:#7c7c7c"></div>
<div style="left:543px;top:566px;width:1px;height:1px;background:#7c7c7c"></div>
<div style="left:547px;top:566px;width:1px;height:1px;background:#7c7c7c"></div>
<div style="left:551px;top:566px;width:1px;height:1px;background:#7c7c7c"></div>
<div style="left:555px;top:566px;width:1px;height:1px;background:#7c7c7c"></div>
<div style="left:559px;top:566px;width:1px;height:1px;background:#7c7c7c"></div>
<div style="left:563px;top:566px;width:1px;height:1px;background:#7c7c7c"></div>
<div style="left:567px;top:566px;width:1px;height:1px;background:#7c7c7c"></div>
<div style="left:571px;top:566px;width:1px;height:1px;background:#7c7c7c"></div>
<div style="left:575px;top:566px;width:1px;height:1px;background:#7c7c7c"></div>
<div style="left:579px;top:566px;width:1px;height:1px;background:#7c7c7c"></div>
<div style="left:583px;top:566px;width:1px;height:1px;background:#7c7c7c"></div>
<div style="left:587px;top:566px;width:1px;height:1px;background:#7c7c7c"></div>
<div style="left:591px;top:566px;width:1px;height:1px;background:#7c7c7c"></div>
<div style="left:595px;top:566px;width:1px;height:1px;background:#7c7c7c"></div>
<div style="left:599px;top:566px;width:1px;height:1px;background:#7c7c7c"></div>
<div style="left:603px;top:566px;width:1px;height:1px;background:#7c7c7c"></div>
<div style="left:607px;top:566px;width:1px;height:1px;background:#7c7c7c"></div>
<div style="left:611px;top:566px;width:1px;height:1px;background:#7c7c7c"></div>
<div style="left:615px;top:566px;width:1px;height:1px;background:#7c7c7c"></div>
<div style="left:619px;top:566px;width:1px;height:1px;background:#7c7c7c"></div>
<div style="left:623px;top:566px;width:1px;height:1px;background:#7c7c7c"></div>
<div style="left:627px;top:566px;width:1px;height:1px;background:#7c7c7c"></div>
<div style="left:631px;top:566px;width:1px;height:1px;background:#7c7c7c"></div>
<div style="left:635px;top:566px;width:1px;height:1px;background:#7c7c7c"></div>
<div style="left:639px;top:566px;width:1px;height:1px;background:#7c7c7c"></div>
<div style="left:643px;top:566px;width:1px;height:1px;background:#7c7c7c"></div>
<div style="left:647px;top:566px;width:1px;height:1px;background:#7c7c7c"></div>
<div style="left:651px;top:566px;width:1px;height:1px;background:#7c7c7c"></div>
<div style="left:655px;top:566px;width:1px;height:1px;background:#7c7c7c"></div>
<div style="left:659px;top:566px;width:1px;height:1px;background:#7c7c7c"></div>
<div style="left:663px;top:566px;width:1px;height:1px;background:#7c7c7c"></div>
<div style="left:667px;top:566px;width:1px;height:1px;background:#7c7c7c"></div>
<div style="left:671px;top:566px;width:1px;height:1px;background:#7c7c7c"></div>
<div style="left:675px;top:566px;width:1px;height:1px;background:#7c7c7c"></div>
<div style="left:679px;top:566px;width:1px;height:1px;background:#7c7c7c"></div>
<div style="left:683px;top:566px;width:1px;height:1px;background:#7c7c7c"></div>
<div style="left:687px;top:566px;width:1px;height:1px;background:#7c7c7c"></div>
<div style="left:691px;top:566px;width:1px;height:1px;background:#7c7c7c"></div>
<div style="left:695px;top:566px;width:1px;height:1px;background:#7c7c7c"></div>
<div style="left:699px;top:566px;width:1px;height:1px;background:#7c7c7c"></div>
<div style="left:703px;top:566px;width:1px;height:1px;background:#7c7c7c"></div>
<div style="left:707px;top:566px;width:1px;height:1px;background:#7c7c7c"></div>
<div style="left:711px;top:566px;width:1px;height:1px;background:#7c7c7c"></div>
<div style="left:715px;top:566px;width:1px;height:1px;background:#7c7c7c"></div>
<div style="left:719px;top:566px;width:1px;height:1px;background:#7c7c7c"></div>
<div style="left:723px;top:566px;width:1px;height:1px;background:#7c7c7c"></div>
<div style="left:727px;top:566px;width:1px;height:1px;background:#7c7c7c"></div>
<div style="left:731px;top:566px;width:1px;height:1px;background:#7c7c7c"></div>
<div style="left:735px;top:566px;width:1px;height:1px;background:#7c7c7c"></div>
<div style="left:739px;top:566px;width:1px;height:1px;background:#7c7c7c"></div>
<div style="left:743px;top:566px;width:1px;height:1px;background:#7c7c7c"></div>
<div style="left:747px;top:566px;width:1px;height:1px;background:#7c7c7c"></div>
<div style="left:751px;top:566px;width:1px;height:1px;background:#7c7c7c"></div>
<div style="left:755px;top:566px;width:1px;height:1px;background:#7c7c7c"></div>
<div style="left:759px;top:566px;width:1px;height:1px;background:#7c7c7c"></div>
<div style="left:763px;top:566px;width:1px;height:1px;background:#7c7c7c"></div>
<div style="left:767px;top:566px;width:1px;height:1px;background:#7c7c7c"></div>
<div style="left:771px;top:566px;width:1px;height:1px;background:#7c7c7c"></div>
<div style="left:775px;top:566px;width:1px;height:1px;background:#7c7c7c"></div>
<div style="left:779px;top:566px;width:1px;height:1px;background:#7c7c7c"></div>
<div style="left:783px;top:566px;width:1px;height:1px;background:#7c7c7c"></div>
<div style="left:787px;top:566px;width:1px;height:1px;background:#7c7c7c"></div>
<div style="left:791px;top:566px;width:1px;height:1px;background:#7c7c7c"></div>
<div style="left:795px;top:566px;width:1px;height:1px;background:#7c7c7c"></div>
<div style="left:799px;top:566px;width:1px;height:1px;background:#7c7c7c"></div>
<div style="left:803px;top:566px;width:1px;height:1px;background:#7c7c7c"></div>
<div style="left:807px;top:566px;width:1px;height:1px;background:#7c7c7c"></div>
<div style="left:811px;top:566px;width:1px;height:1px;background:#7c7c7c"></div>
<div style="left:815px;top:566px;width:1px;height:1px;background:#7c7c7c"></div>
<div style="left:819px;top:566px;width:1px;height:1px;background:#7c7c7c"></div>
<div style="left:823px;top:566px;width:1px;height:1px;background:#7c7c7c"></div>
<div style="left:827px;top:566px;width:1px;height:1px;background:#7c7c7c"></div>
<div style="left:831px;top:566px;width:1px;height:1px;background:#7c7c7c"></div>
<div style="left:835px;top:566px;width:1px;height:1px;background:#7c7c7c"></div>
<div style="left:839px;top:566px;width:1px;height:1px;background:#7c7c7c"></div>
<div style="left:843px;top:566px;width:1px;height:1px;background:#7c7c7c"></div>
<div style="left:847px;top:566px;width:1px;height:1px;background:#7c7c7c"></div>
<div style="left:851px;top:566px;width:1px;height:1px;background:#7c7c7c"></div>
<div style="left:855px;top:566px;width:1px;height:1px;background:#7c7c7c"></div>
<div style="left:859px;top:566px;width:1px;height:1px;background:#7c7c7c"></div>
<div style="left:863px;top:566px;width:1px;height:1px;background:#7c7c7c"></div>
<div style="left:867px;top:566px;width:1px;height:1px;background:#7c7c7c"></div>
<div style="left:871px;top:566px;width:1px;height:1px;background:#7c7c7c"></div>
<div style="left:875px;top:566px;width:1px;height:1px;background:#7c7c7c"></div>
<div style="left:879px;top:566px;width:1px;height:1px;background:#7c7c7c"></div>
<div style="left:883px;top:566px;width:1px;height:1px;background:#7c7c7c"></div>
<div style="left:887px;top:566px;width:1px;height:1px;background:#7c7c7c"></div>
<div style="left:891px;top:566px;width:1px;height:1px;background:#7c7c7c"></div>
<div style="left:895px;top:566px;width:1px;height:1px;background:#7c7c7c"></div>
<div style="left:899px;top:566px;width:1px;height:1px;background:#7c7c7c"></div>
<div style="left:903px;top:566px;width:1px;height:1px;background:#7c7c7c"></div>
<div style="left:907px;top:566px;width:1px;height:1px;background:#7c7c7c"></div>
<div style="left:911px;top:566px;width:1px;height:1px;background:#7c7c7c"></div>
<div style="left:915px;top:566px;width:1px;height:1px;background:#7c7c7c"></div>
<div style="left:919px;top:566px;width:1px;height:1px;background:#7c7c7c"></div>
<div style="left:923px;top:566px;width:1px;height:1px;background:#7c7c7c"></div>
<div style="left:927px;top:566px;width:1px;height:1px;background:#7c7c7c"></div>
<div style="left:931px;top:566px;width:1px;height:1px;background:#7c7c7c"></div>
<div style="left:935px;top:566px;width:1px;height:1px;background:#7c7c7c"></div>
<div style="left:939px;top:566px;width:1px;height:1px;background:#7c7c7c"></div>
<div style="left:943px;top:566px;width:1px;height:1px;background:#7c7c7c"></div>
<div style="left:947px;top:566px;width:1px;height:1px;background:#7c7c7c"></div>
<div style="left:951px;top:566px;width:1px;height:1px;background:#7c7c7c"></div>
<div style="left:955px;top:566px;width:1px;height:1px;background:#7c7c7c"></div>
<div style="left:959px;top:566px;width:1px;height:1px;background:#7c7c7c"></div>
<div style="left:963px;top:566px;width:1px;height:1px;background:#7c7c7c"></div>
<div style="left:967px;top:566px;width:1px;height:1px;background:#7c7c7c"></div>
<div style="left:971px;top:566px;width:1px;height:1px;background:#7c7c7c"></div>
<div style="left:975px;top:566px;width:1px;height:1px;background:#7c7c7c"></div>
<div style="left:979px;top:566px;width:1px;height:1px;background:#7c7c7c"></div>
<svg style="left:5px;top:562px" width="20" height="5" viewBox="0 0 20 5"><path d="M0 4.5 L4 0.5 L8 4.5 Z" fill="#5b7fc1"/><path d="M0.3 4.3 L4 0.6" stroke="#1a1a1a" stroke-width="1.1"/><path d="M12 0 L20 0 L16 4.5 Z" fill="#5b7fc1"/><path d="M12 0.5 L20 0.5" stroke="#1a1a1a" stroke-width="1"/></svg>
<div style="left:2px;top:569px;width:982px;height:1px;background:#8d9aa8"></div>
<div style="left:4px;top:577px;width:976px;height:94px;box-sizing:border-box;border:2px solid #9a9a9a"></div>
<div style="left:6px;top:579px;width:972px;height:90px;box-sizing:border-box;border-left:1px solid #fbfbfb;border-top:1px solid #fbfbfb"></div>
<div style="left:8.7px;top:575px;width:134.9px;height:6px;background:#ededed"></div>
<div class="t" style="left:10.41px;top:569.00px;font-size:12px;font-weight:bold;color:#1c1c28;transform:scaleX(0.9788);">Import &amp; Setup History:</div>
<div style="left:8px;top:588px;width:968px;height:78px;border:1px solid #7d91a6;box-sizing:border-box;background:#fff"></div>
<div class="t" style="left:9.12px;top:584.00px;font-size:11.4px;font-weight:normal;color:#1a1a1a;transform:scaleX(1.0218);">Generating Stackup</div>
<div class="t" style="left:8.70px;top:600.00px;font-size:11.4px;font-weight:normal;color:#1a1a1a;transform:scaleX(1.0651);">Board Import Complete.</div>
<div class="t" style="left:8.90px;top:616.00px;font-size:11.4px;font-weight:normal;color:#1a1a1a;transform:scaleX(1.0445);">mb Imported Successfully</div>
<div class="t" style="left:8.88px;top:632.00px;font-size:11.4px;font-weight:normal;color:#1a1a1a;transform:scaleX(1.0690);">mb Import Finished</div>
<div style="left:960px;top:589px;width:15px;height:76px;background:#eaeaea;border-left:1px solid #c3cbd3;box-sizing:border-box"></div>
<div style="left:960px;top:589px;width:15px;height:16px;background:linear-gradient(#f8f8f8,#e3e3e3);border:1px solid #cad2da;box-sizing:border-box"></div>
<svg style="left:963px;top:594px" width="10" height="6"><path d="M0 5 L10 5 L5 0 Z" fill="#262626"/></svg>
<div style="left:960px;top:635px;width:15px;height:15px;background:linear-gradient(#e8f0fb,#c8d9f1);border:1px solid #7b9bd1;box-sizing:border-box"></div>
<svg style="left:963px;top:639px" width="9" height="7"><path d="M0 0.5 H9 M0 3.5 H9 M0 6.5 H9" stroke="#4b70c1" stroke-width="1"/></svg>
<div style="left:960px;top:650px;width:15px;height:15px;background:linear-gradient(#f8f8f8,#e3e3e3);border:1px solid #cad2da;box-sizing:border-box"></div>
<svg style="left:963px;top:655px" width="10" height="6"><path d="M0 0 L10 0 L5 5 Z" fill="#262626"/></svg>
<div style="left:204px;top:683px;width:16px;height:16px;border:1px solid #8c9cae;box-sizing:border-box;background:linear-gradient(#f6f8fb,#d3dfeb)"></div>
<svg style="left:204px;top:683px" width="16" height="16"><path d="M4.5 8.5 L6.5 12 L11.5 4.5" stroke="#1a1a1a" stroke-width="2.2" fill="none"/></svg>
<div class="t" style="left:223.71px;top:681.00px;font-size:12px;font-weight:bold;color:#1c1c28;transform:scaleX(0.9724);"><u>A</u>dvanced</div>
<div style="left:288px;top:679px;width:89px;height:23px;box-sizing:border-box;border:2px solid #7a8a9b;background:linear-gradient(#ffffff,#f1f5f9 40%,#cfdce9)"></div>
<div class="t" style="left:317.10px;top:681.00px;font-size:12px;font-weight:bold;color:#1c1c28;transform:scaleX(1.1138);"><u>N</u>ext</div>
<div style="left:382px;top:679px;width:88px;height:23px;box-sizing:border-box;border:1px solid #7a8a9b;background:linear-gradient(#ffffff,#f1f5f9 40%,#cfdce9)"></div>
<div class="t" style="left:412.74px;top:681.00px;font-size:12px;font-weight:bold;color:#1c1c28;transform:scaleX(0.9427);"><u>B</u>ack</div>
<div style="left:476px;top:679px;width:88px;height:23px;box-sizing:border-box;border:1px solid #7a8a9b;background:linear-gradient(#ffffff,#f1f5f9 40%,#cfdce9)"></div>
<div class="t" style="left:504.46px;top:681.00px;font-size:12px;font-weight:bold;color:#1c1c28;transform:scaleX(0.9118);"><u>F</u>inish</div>
<div style="left:570px;top:679px;width:119px;height:23px;box-sizing:border-box;border:1px solid #7a8a9b;background:linear-gradient(#ffffff,#f1f5f9 40%,#cfdce9)"></div>
<div class="t" style="left:594.84px;top:681.00px;font-size:12px;font-weight:bold;color:#1c1c28;transform:scaleX(1.0655);">New <u>I</u>mport</div>
<div style="left:695px;top:679px;width:88px;height:23px;box-sizing:border-box;border:1px solid #7a8a9b;background:linear-gradient(#ffffff,#f1f5f9 40%,#cfdce9)"></div>
<div class="t" style="left:720.85px;top:681.00px;font-size:12px;font-weight:bold;color:#1c1c28;transform:scaleX(0.9411);"><u>C</u>ancel</div>
<div style="left:0px;top:0px;width:1px;height:705px;background:#b2b2b2"></div>
<div style="left:1px;top:55px;width:1px;height:650px;background:#9aa6b4"></div>
<div style="left:984px;top:0px;width:1px;height:705px;background:#a6a6a6"></div>
<div style="left:0px;top:704px;width:985px;height:1px;background:#a6a6a6"></div>
</body></html>
